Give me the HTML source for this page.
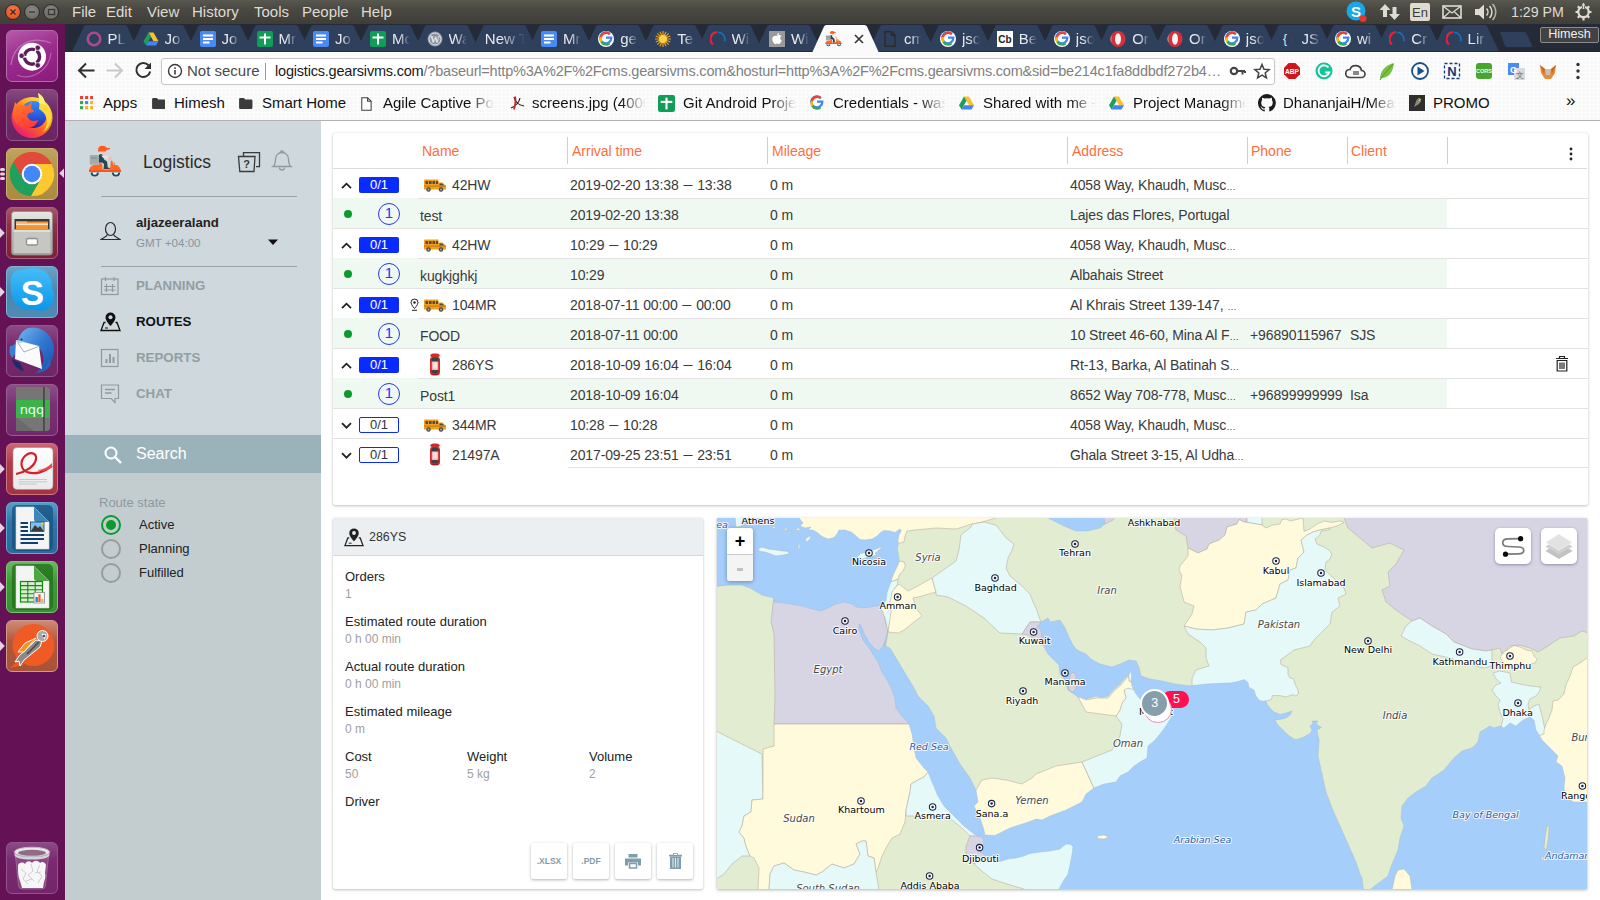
<!DOCTYPE html>
<html lang="en">
<head>
<meta charset="utf-8">
<title>Logistics</title>
<style>
*{box-sizing:border-box;margin:0;padding:0}
html,body{width:1600px;height:900px;overflow:hidden;background:#fff}
body{font-family:"Liberation Sans","DejaVu Sans",sans-serif;position:relative;color:#333}
.abs{position:absolute}
/* ---------- Ubuntu top panel ---------- */
#panel{left:0;top:0;width:1600px;height:24px;background:linear-gradient(#59584f,#4a4943 35%,#3e3d38);color:#dfdbd2;font-size:15px}
#panel .m{position:absolute;top:3px;line-height:18px;white-space:nowrap}
.wb{position:absolute;top:4px;width:16px;height:16px;border-radius:50%;border:1px solid #2b2a27}
/* ---------- launcher ---------- */
#launcher{left:0;top:24px;width:65px;height:876px;background:#641156}
.tile{position:absolute;left:6px;width:52px;height:52px;border-radius:6px;overflow:hidden}
/* ---------- chrome ---------- */
#tabs{left:65px;top:24px;width:1535px;height:28px;background:#242b36}
.tab{position:absolute;top:1px;height:26.500px;width:67px;color:#e8eaf0;font-size:15px}
.tab .sh{position:absolute;left:0;top:0;width:100%;height:100%}
.tab .ic{position:absolute;left:14px;top:6px;width:16px;height:16px}
.tab .tx{position:absolute;left:36px;top:5px;line-height:18px;white-space:nowrap;width:18px;overflow:hidden}
#toolbar{left:65px;top:52px;width:1535px;height:68px;background-color:#f8f8f8;background-image:linear-gradient(#fdfdfd 1px,transparent 1px),linear-gradient(90deg,#fdfdfd 1px,transparent 1px);background-size:4px 4px}
#omni{left:161px;top:58px;width:1114px;height:27px;background:#fff;border:1px solid #c6c6c6;border-radius:3px}
.bm{position:absolute;top:94px;font-size:15px;line-height:18px;color:#111;white-space:nowrap}
.fade{overflow:hidden;-webkit-mask-image:linear-gradient(90deg,#000 78%,transparent 100%);mask-image:linear-gradient(90deg,#000 78%,transparent 100%)}
.tab .tx{-webkit-mask-image:linear-gradient(90deg,#000 40%,transparent 100%);mask-image:linear-gradient(90deg,#000 40%,transparent 100%)}
/* ---------- app sidebar ---------- */
#side{left:65px;top:121px;width:256px;height:779px;background:#cfd8dc}
#side2{left:65px;top:472px;width:256px;height:428px;background:#c3cdd0}
#search{left:65px;top:435px;width:256px;height:38px;background:#9ab3ba}
.mi{position:absolute;left:136px;font-size:13.300px;font-weight:bold;line-height:16px;color:#929ea3;letter-spacing:0}
/* ---------- main ---------- */
.card{background:#fff;box-shadow:0 1px 3px rgba(0,0,0,.24),0 0 1px rgba(0,0,0,.14)}
#tbl{left:333px;top:133px;width:1255px;height:371.500px;border-radius:2px}
.th{position:absolute;top:9px;font-size:14px;line-height:18px;color:#ff6e3a}
.vs{position:absolute;top:4px;width:1px;height:27px;background:#cfcfcf}
.row{position:absolute;left:0;width:1255px;height:30px;border-bottom:1px solid #e3e3e3;font-size:14px;color:#3a3a3a}
.row.g::before{content:"";position:absolute;left:0;top:-1px;width:1114px;height:30px;background:#f0f9f1}
.row span{position:absolute;top:6px;line-height:18px;white-space:nowrap;letter-spacing:-.120px}
.row span.ar{word-spacing:-1.200px}
.row span i{font-style:normal;font-size:9.500px;letter-spacing:0}
.row.x{border-bottom:none}
.row.x::after{content:"";position:absolute;left:85px;bottom:0;width:1170px;height:1px;background:#e3e3e3;z-index:1}
.row span b{font-weight:bold;font-size:9px;margin:0 1px;position:relative;top:-1.700px;letter-spacing:0}
.row.p span,.row.g span{top:7px}
.bdg{position:absolute;left:26px;top:8px;width:40px;height:16px;border-radius:2px;background:#0a2bff;color:#fff;font-size:13px;line-height:16px;text-align:center}
.bdg.o{background:#fff;border:1.5px solid #0a2bff;color:#333;line-height:13px}
.dot{position:absolute;left:11px;top:11px;width:8px;height:8px;border-radius:50%;background:#0b9a2c}
.num{position:absolute;left:45px;top:4px;width:22px;height:22px;border-radius:50%;border:1.800px solid #2236f5;color:#2236f5;font-size:15px;line-height:18.500px;text-align:center}
.chev{position:absolute;left:8px;top:11.500px;width:11px;height:9px}
#info{left:333px;top:518px;width:370px;height:371px;border-radius:2px}
.lb{position:absolute;left:12px;font-size:13px;line-height:15px;color:#222;white-space:nowrap}
.vl{position:absolute;left:12px;font-size:12px;line-height:14px;color:#a0a0a0;white-space:nowrap}
.btn{position:absolute;top:325px;width:36px;height:36px;background:#fff;border-radius:2px;box-shadow:0 1px 3px rgba(0,0,0,.3);color:#7f9dab;font-size:8.5px;font-weight:bold;text-align:center;line-height:36px}
#map{left:717px;top:518px;width:870px;height:371px;overflow:hidden;background:#a5cdfa;box-shadow:0 1px 3px rgba(0,0,0,.3)}
</style>
</head>
<body>
<div id="panel" class="abs">
  <div class="wb" style="left:5px;background:radial-gradient(circle at 50% 35%,#f47b4d,#dd4814)"></div>
  <div class="wb" style="left:24px;background:radial-gradient(circle at 50% 35%,#8a8983,#63625c)"></div>
  <div class="wb" style="left:43px;background:radial-gradient(circle at 50% 35%,#8a8983,#63625c)"></div>
  <svg class="abs" style="left:5px;top:4px" width="56" height="16" viewBox="0 0 56 16" fill="none" stroke="#3a2a22" stroke-width="1.4">
    <path d="M5.5 5.5l5 5M10.5 5.5l-5 5"/><path d="M24 8h6" stroke="#3b3a36"/><rect x="43.5" y="5.5" width="6" height="5" stroke="#3b3a36"/>
  </svg>
  <span class="m" style="left:72px">File</span>
  <span class="m" style="left:106px">Edit</span>
  <span class="m" style="left:147px">View</span>
  <span class="m" style="left:192px">History</span>
  <span class="m" style="left:254px">Tools</span>
  <span class="m" style="left:302px">People</span>
  <span class="m" style="left:361px">Help</span>
  <!-- indicators -->
  <svg class="abs" style="left:1344px;top:0" width="250" height="24" viewBox="0 0 250 24">
    <circle cx="12" cy="11" r="9.5" fill="#1aa7e8"/>
    <text x="12" y="16.5" font-size="15" font-weight="bold" fill="#fff" text-anchor="middle" font-family="Liberation Sans, sans-serif">S</text>
    <circle cx="19" cy="18.5" r="3.6" fill="#e8362b"/>
    <g fill="#dfdbd2"><path d="M41 4l-5.5 6h3.5v7h4v-7h3.500z"/><path d="M49 20l-5.5-6h3.500v-7h4v7h3.500z" transform="translate(1.500,0)"/></g>
    <rect x="66" y="3" width="20" height="18" rx="2" fill="#dfdbd2"/>
    <text x="76" y="17" font-size="13" fill="#3c3b37" text-anchor="middle" font-family="Liberation Sans, sans-serif">En</text>
    <g fill="none" stroke="#dfdbd2" stroke-width="1.6"><rect x="99" y="6" width="18" height="12"/><path d="M99 6l9 7 9-7M99 18l6.500-6M117 18l-6.500-6" stroke-width="1.200"/></g>
    <path d="M131 9h4l5-4.500v15l-5-4.500h-4z" fill="#dfdbd2"/>
    <g fill="none" stroke="#dfdbd2" stroke-width="1.500"><path d="M142.500 8.500a5 5 0 0 1 0 7"/><path d="M145.500 6a8.500 8.500 0 0 1 0 12"/><path d="M148.500 4a11.500 11.500 0 0 1 0 16" opacity=".7"/></g>
    <text x="167" y="17.300" font-size="14.200" fill="#dfdbd2" font-family="Liberation Sans, sans-serif">1:29 PM</text>
    <g fill="none" stroke="#dfdbd2"><circle cx="239.500" cy="12" r="5.200" stroke-width="2.200"/><path d="M239.500 3v5" stroke-width="3" stroke="#3d3c37"/><path d="M239.500 3v6" stroke-width="1.600"/><path d="M239.500 4v2M239.500 18v2.500M231.500 12h2.500M245 12h2.500M233.800 6.300l1.800 1.800M243.400 15.900l1.800 1.800M233.800 17.700l1.800-1.800M243.400 8.100l1.800-1.800" stroke-width="2.200"/></g>
  </svg>
</div>
<!--LAUNCHER-START-->
<div id="launcher" class="abs">
  <!-- 1 ubuntu dash -->
  <div class="tile" style="top:6px;background:linear-gradient(160deg,#b65aa8 0,#9b2d8e 45%,#8a1a7c 100%);border:1px solid #b56aa9">
    <svg width="50" height="50" viewBox="0 0 50 50"><path d="M4 34C6 14 24 4 44 12" fill="none" stroke="#c98cc0" stroke-width="1.200" opacity=".7"/><path d="M10 44c14 6 32-4 34-22" fill="none" stroke="#c98cc0" stroke-width="1.200" opacity=".6"/><circle cx="25" cy="25.700" r="14" fill="#fff"/><circle cx="25" cy="25.700" r="7.600" fill="none" stroke="#5e1d5a" stroke-width="3.400"/><g stroke="#fff" stroke-width="1.500"><path d="M25 25.700h-12M25 25.700l6 10.400M25 25.700l6-10.400"/></g><circle cx="14.600" cy="24.800" r="2.700" fill="#5e1d5a" stroke="#fff" stroke-width=".700"/><circle cx="30.800" cy="34.300" r="2.700" fill="#5e1d5a" stroke="#fff" stroke-width=".700"/><circle cx="30.800" cy="16.800" r="2.700" fill="#5e1d5a" stroke="#fff" stroke-width=".700"/></svg>
  </div>
  <!-- 2 firefox -->
  <div class="tile" style="top:65px;background:linear-gradient(#86487f 0,#6e2a66 40%,#6a2562 100%);border:1px solid #8d5a87">
    <svg width="50" height="50" viewBox="0 0 50 50"><defs><linearGradient id="ffa" x1=".9" y1=".1" x2=".2" y2="1"><stop offset="0" stop-color="#fff060"/><stop offset=".3" stop-color="#ffb01f"/><stop offset=".6" stop-color="#ff5a2a"/><stop offset="1" stop-color="#e3157f"/></linearGradient><linearGradient id="ffb" x1=".5" y1="0" x2=".5" y2="1"><stop offset="0" stop-color="#3a8df5"/><stop offset=".6" stop-color="#2a55d8"/><stop offset="1" stop-color="#3a1f9a"/></linearGradient><linearGradient id="ffc" x1=".2" y1="0" x2=".6" y2="1"><stop offset="0" stop-color="#ff7a2a"/><stop offset="1" stop-color="#ff3a3a"/></linearGradient></defs>
    <circle cx="25" cy="27.500" r="20.500" fill="url(#ffa)"/><circle cx="26.500" cy="24.500" r="13.500" fill="url(#ffb)"/>
    <path d="M8 12l4 5c3-2 6-2 8-1l5-4-1 6c2 1 3 3 3 4l-5 1c-2 1-2 3-1 5 2 3 6 4 10 2-1 5-6 8-11 8-8 0-14-6-14-14 0-4 1-8 2-12z" fill="url(#ffc)"/>
    <path d="M31 3c5 3 7 7 7 12 4 3 6 8 6 13 0 6-3 11-8 14 4-5 5-10 3-15-1-4-4-6-7-8 1-6 0-11-1-16z" fill="#ffd83b"/><path d="M31 3c5 3 7 7 7 12-2-1-4-2-6-2 0-4 0-7-1-10z" fill="#fff27a"/></svg>
  </div>
  <!-- 3 chrome (active) -->
  <div class="tile" style="top:124px;background:linear-gradient(#bfa65c 0,#b0954a 40%,#a88c3f 100%);border:1px solid #c9b373">
    <svg width="50" height="50" viewBox="0 0 50 50"><g transform="translate(25,25)"><path id="chs" d="M0,-10L19.600,-10A22,22 0 0 1 -1.140,21.970L8.660,5A10,10 0 0 0 0,-10Z" fill="#fdc92f"/><circle r="22" fill="#e24a3b"/><path d="M0,-10L19.600,-10A22,22 0 0 1 -1.140,21.970L8.660,5A10,10 0 0 0 0,-10Z" fill="#fdc92f"/><path d="M0,-10L19.600,-10A22,22 0 0 1 -1.140,21.970L8.660,5A10,10 0 0 0 0,-10Z" fill="#1fa15d" transform="rotate(120)"/><path d="M0,-10L19.600,-10A22,22 0 0 1 -1.140,21.970L8.660,5A10,10 0 0 0 0,-10Z" fill="#e24a3b" transform="rotate(240)"/><circle r="10.300" fill="#fff"/><circle r="8.300" fill="#4386f5"/></g></svg>
  </div>
  <svg class="abs" style="left:0;top:139px" width="65" height="24" viewBox="0 0 65 24"><g fill="#e4d3e0"><rect x="0" y="5" width="5" height="3" rx="1.500"/><rect x="0" y="9.500" width="5" height="3" rx="1.500"/><rect x="0" y="14" width="5" height="3" rx="1.500"/><path d="M64 5.500v9.500l-4.800-4.700z"/></g></svg>
  <!-- 4 files -->
  <div class="tile" style="top:183px;background:linear-gradient(#a4596b 0,#8e3046 35%,#7c2038 100%);border:1px solid #a9657a">
    <svg width="50" height="50" viewBox="0 0 50 50"><defs><linearGradient id="fcb" x1="0" y1="0" x2="0" y2="1"><stop offset="0" stop-color="#e6e6e4"/><stop offset="1" stop-color="#a9a9a5"/></linearGradient></defs><rect x="4.500" y="3.500" width="41" height="43.500" rx="3" fill="url(#fcb)" stroke="#8a8a86" stroke-width=".800"/><rect x="7.500" y="11" width="35" height="10.500" fill="#3a3835"/><rect x="9" y="13.500" width="32" height="8" fill="#f0943a"/><rect x="9" y="15.500" width="32" height="1.600" fill="#fde3c4"/><rect x="9" y="13.500" width="11" height="2" fill="#f7b877"/><rect x="6" y="21.500" width="38" height="24" rx="1.500" fill="#c6c6c2" stroke="#9b9b97" stroke-width=".800"/><rect x="6.500" y="22" width="37" height="2" fill="#dededb"/><rect x="19.500" y="30.500" width="11" height="6.500" rx="1.500" fill="#fafafa" stroke="#8f8f8b" stroke-width="1.300"/></svg>
  </div>
  <!-- 5 skype -->
  <div class="tile" style="top:242px;background:linear-gradient(#6aa3c6 0,#4a86ad 50%,#4f8cb3 100%);border:1px solid #7fb1d0">
    <svg width="50" height="50" viewBox="0 0 50 50"><defs><linearGradient id="sk" x1="0" y1="0" x2="0" y2="1"><stop offset="0" stop-color="#46bdf8"/><stop offset="1" stop-color="#0a96ea"/></linearGradient></defs><path d="M4 16C2 8 9 1 17 3c5-3 12-3 18 0 7 3 11 10 10 18 4 7 2 16-4 20-5 4-12 3-15 1-8 2-17-2-20-10-2-5-3-11-2-16z" fill="url(#sk)"/><text x="25.500" y="37.500" font-size="35" font-weight="bold" text-anchor="middle" fill="#fff" font-family="Liberation Sans, sans-serif">S</text></svg>
  </div>
  <!-- 6 thunderbird -->
  <div class="tile" style="top:301px;background:linear-gradient(#8b4a84 0,#762a6c 40%,#6f2566 100%);border:1px solid #91598b">
    <svg width="50" height="50" viewBox="0 0 50 50"><defs><linearGradient id="tb" x1="0" y1="0" x2="1" y2="1"><stop offset="0" stop-color="#7ab4ee"/><stop offset=".5" stop-color="#2f78d0"/><stop offset="1" stop-color="#1a4fa8"/></linearGradient></defs><path d="M21 2c12-3 25 6 26 20 1 12-7 22-18 25 6-5 9-11 7-18-2-8-10-12-18-9l-7-5c1-6 5-11 10-13z" fill="url(#tb)"/><path d="M3 20c2 0 4-1 6-3l3 6-7 9c-3-4-3-8-2-12z" fill="#3a7fd6"/><path d="M5 33c1 6 6 11 12 12l-4-8z" fill="#1a2a6a"/><path d="M9 14l23 6 3 23-27-10z" fill="#fbfbfb"/><path d="M9 14l8 12 16-6" fill="none" stroke="#9a9a9a" stroke-width=".800"/><path d="M9 14l2 4 6-2z" fill="#b9d3ee"/><circle cx="14.500" cy="13.500" r="1" fill="#3a2a10"/><path d="M28 47c8-2 13-8 14-15l2 6c-2 5-8 9-16 9z" fill="#2a62bc"/></svg>
  </div>
  <!-- 7 notes (nqq) -->
  <div class="tile" style="top:360px;background:linear-gradient(#8b4f87 0,#7a3074 40%,#72296b 100%);border:1px solid #936090">
    <svg width="50" height="50" viewBox="0 0 50 50"><path d="M9 2h30q4 0 4 4v36q0 4-4 4H9z" fill="#767676"/><path d="M9 32v14h18z" fill="#6a6a6a"/><rect x="9" y="15" width="34" height="18" fill="#3cb34a"/><rect x="36" y="2" width="1.800" height="44" fill="#4a4a4a"/><text x="25" y="29" font-size="13" text-anchor="middle" fill="#f2fff2" font-family="DejaVu Sans, sans-serif">nqq</text></svg>
  </div>
  <!-- 8 pdf reader -->
  <div class="tile" style="top:419px;background:linear-gradient(#cc6670 0,#b03a48 40%,#a53442 100%);border:1px solid #cf7680">
    <svg width="50" height="50" viewBox="0 0 50 50"><defs><linearGradient id="ev" x1="0" y1="0" x2="0" y2="1"><stop offset="0" stop-color="#fff"/><stop offset="1" stop-color="#e9e9e9"/></linearGradient></defs><rect x="6" y="3.500" width="40" height="42" rx="4" fill="url(#ev)" stroke="#9a9090" stroke-width=".600"/><path d="M9 30c10-2 19-8 20-15 1-6-6-8-11-3-5 5-5 13 2 16 8 3 18 0 25-6" fill="none" stroke="#d8202a" stroke-width="2.200"/><path d="M30 26c6 0 11-3 15-7v4c-5 4-10 5-15 3z" fill="#e04a52"/><g stroke="#bdbdbd" stroke-width=".800"><path d="M12 35.500h28M12 37.800h28M12 40h18"/></g></svg>
  </div>
  <!-- 9 writer -->
  <div class="tile" style="top:478px;background:linear-gradient(#5a9cc8 0,#2f74a8 40%,#2a6a9c 100%);border:1px solid #6aa6cf">
    <svg width="50" height="50" viewBox="0 0 50 50"><rect x="5" y="2" width="41" height="46" rx="5" fill="#14507f" opacity=".75"/><path d="M9 4h18l15 15v27H9z" fill="#f4f4f4" stroke="#d6d6d6" stroke-width=".600"/><path d="M27 4l15 15H30q-3 0-3-3z" fill="#3f86bb"/><g fill="#113f70"><rect x="13.500" y="19" width="7.500" height="2"/><rect x="13.500" y="23" width="7.500" height="2"/><rect x="13.500" y="27" width="7.500" height="2"/><rect x="13.500" y="31" width="23.500" height="2"/><rect x="13.500" y="35" width="23.500" height="2"/><rect x="13.500" y="39" width="17.500" height="2"/></g><rect x="23.500" y="19" width="13.500" height="9.500" fill="#7fc1ee" stroke="#113f70" stroke-width=".800"/><path d="M24 28l4-6 3 3 2-2 3.500 5z" fill="#3a3a3a"/><rect x="34" y="19.500" width="2.500" height="2.500" fill="#f2c52e"/></svg>
  </div>
  <!-- 10 calc -->
  <div class="tile" style="top:537px;background:linear-gradient(#6ab860 0,#3f9a36 40%,#3a9030 100%);border:1px solid #7cc472">
    <svg width="50" height="50" viewBox="0 0 50 50"><rect x="5" y="2" width="41" height="46" rx="5" fill="#1d6f17" opacity=".75"/><path d="M9 4h18l15 15v27H9z" fill="#f4f4f4" stroke="#d6d6d6" stroke-width=".600"/><path d="M27 4l15 15H30q-3 0-3-3z" fill="#4aa83e"/><rect x="13.500" y="19.500" width="22" height="20.500" fill="#d5f0cf" stroke="#168a0e" stroke-width="1.200"/><g stroke="#168a0e" stroke-width="1.100"><path d="M13.500 23.600h22M13.500 27.700h22M13.500 31.800h22M13.500 35.900h22M20.800 19.500v20.500M28.200 19.500v20.500"/></g><rect x="27" y="30.500" width="10.500" height="10.500" fill="#f2f2f2" stroke="#8a8a8a" stroke-width=".800"/><rect x="28.500" y="35" width="2.300" height="5" fill="#2a7fd6"/><rect x="31.300" y="32.300" width="2.300" height="7.700" fill="#e8652a"/><rect x="34.100" y="37" width="2.300" height="3" fill="#f2b82e"/></svg>
  </div>
  <!-- 11 postman -->
  <div class="tile" style="top:596px;background:linear-gradient(#cf8a74 0,#b05a3c 40%,#a85236 100%);border:1px solid #d09a88">
    <svg width="50" height="50" viewBox="0 0 50 50"><circle cx="26.500" cy="24" r="21" fill="#f05a24"/><path d="M3 47l8-7 6 4z" fill="#f05a24"/><path d="M8 41l4-6 17-16 6 1-2 6-16 13-4 6-1-5z" fill="#8a8a8a" stroke="#fff" stroke-width="1"/><path d="M11 31l7-9 11-5-12 14z" fill="#f7941e" stroke="#fff" stroke-width=".900"/><path d="M20 33l12-12" stroke="#4a4a4a" stroke-width="1.600"/><circle cx="35.500" cy="15" r="5.500" fill="#a9a9a9" stroke="#fff" stroke-width="1"/><path d="M34.500 12.500l5 1-2 5z" fill="#fff"/><circle cx="37" cy="15" r="1.300" fill="#555"/></svg>
  </div>
  <!-- trash -->
  <div class="tile" style="top:818px;background:linear-gradient(#8a4a84 0,#7a2a70 35%,#74266b 100%);border:1px solid #90558a">
    <svg width="50" height="50" viewBox="0 0 50 50"><path d="M8 9l3.500 34q.300 3 4 3h19q3.700 0 4-3L42 9z" fill="#fff" fill-opacity=".14" stroke="#d9c6d6" stroke-opacity=".5" stroke-width=".600"/><path d="M11 22c2-3 5-3 7-1 1-3 5-4 7-1 2-3 6-3 8 0 2-2 5-1 6 2l-1 8c1 3 0 6-1 9l-1 6H15l-2-7c-2-4-2-9-2-16z" fill="#f6f6f6"/><g fill="none" stroke="#c9c9c9" stroke-width=".900"><path d="M14 26l5 4-3 6 5 5M24 21l2 7-5 4 6 6M33 22l-3 6 5 5-4 7M19 38l6-2M28 30l6-1"/></g><ellipse cx="25" cy="9" rx="17.500" ry="4.800" fill="#e9e9ea" stroke="#bdbdc0" stroke-width="1"/><ellipse cx="25" cy="9.800" rx="14" ry="3" fill="#8e6c8a"/><path d="M7.500 9q0 5 17.500 5t17.500-5v2.500q0 5-17.500 5T7.500 11.500z" fill="#d4d4d6"/></svg>
  </div>
  <svg class="abs" style="left:0;top:0" width="8" height="660" viewBox="0 0 8 660" fill="#e4d3e0"><path d="M0 204v10l4.800-5zM0 263v10l4.800-5zM0 440v10l4.800-5zM0 499v10l4.800-5zM0 558v10l4.800-5zM0 617v10l4.800-5z"/></svg>
</div>

<!--LAUNCHER-END-->
<!--TABS-START-->
<div id="tabs" class="abs">
<div style="position:absolute;left:0;top:27.300px;width:1535px;height:1.200px;background:#1a2840;z-index:2"></div>
<div class="tab" style="left:6.5px"><svg class="sh" viewBox="0 0 67 27" preserveAspectRatio="none"><path d="M0 27L12 1.500Q12.700 0 14.500 0h38q1.800 0 2.500 1.500L67 27z" fill="#2f405c"/></svg><svg class="ic" viewBox="0 0 16 16"><circle cx="8" cy="8" r="6.200" fill="none" stroke="#b0488f" stroke-width="2.600"/></svg><span class="tx">PL</span></div>
<div class="tab" style="left:63.5px"><svg class="sh" viewBox="0 0 67 27" preserveAspectRatio="none"><path d="M0 27L12 1.500Q12.700 0 14.500 0h38q1.800 0 2.500 1.500L67 27z" fill="#2f405c"/></svg><svg class="ic" viewBox="0 0 16 16"><path d="M5.500 1.500h5l5 8.700h-5z" fill="#fbc02d"/><path d="M5.500 1.500L.500 10.200l2.500 4.300 5-8.700z" fill="#1e9e5a"/><path d="M5.500 10.200h10L13 14.500H3z" fill="#4285f4"/></svg><span class="tx">Jo</span></div>
<div class="tab" style="left:120.5px"><svg class="sh" viewBox="0 0 67 27" preserveAspectRatio="none"><path d="M0 27L12 1.500Q12.700 0 14.500 0h38q1.800 0 2.500 1.500L67 27z" fill="#2f405c"/></svg><svg class="ic" viewBox="0 0 16 16"><rect width="16" height="16" rx="2" fill="#4a8af4"/><g fill="#fff"><rect x="3" y="3.500" width="10" height="2"/><rect x="3" y="7" width="10" height="2"/><rect x="3" y="10.500" width="6.500" height="2"/></g></svg><span class="tx">Jo</span></div>
<div class="tab" style="left:177.5px"><svg class="sh" viewBox="0 0 67 27" preserveAspectRatio="none"><path d="M0 27L12 1.500Q12.700 0 14.500 0h38q1.800 0 2.500 1.500L67 27z" fill="#2f405c"/></svg><svg class="ic" viewBox="0 0 16 16"><rect width="16" height="16" rx="2" fill="#0f9d58"/><g fill="#fff"><rect x="7" y="2.500" width="2" height="11"/><rect x="2.500" y="5.500" width="11" height="2"/></g></svg><span class="tx">Mr</span></div>
<div class="tab" style="left:234.0px"><svg class="sh" viewBox="0 0 67 27" preserveAspectRatio="none"><path d="M0 27L12 1.500Q12.700 0 14.500 0h38q1.800 0 2.500 1.500L67 27z" fill="#2f405c"/></svg><svg class="ic" viewBox="0 0 16 16"><rect width="16" height="16" rx="2" fill="#4a8af4"/><g fill="#fff"><rect x="3" y="3.500" width="10" height="2"/><rect x="3" y="7" width="10" height="2"/><rect x="3" y="10.500" width="6.500" height="2"/></g></svg><span class="tx">Jo</span></div>
<div class="tab" style="left:291.0px"><svg class="sh" viewBox="0 0 67 27" preserveAspectRatio="none"><path d="M0 27L12 1.500Q12.700 0 14.500 0h38q1.800 0 2.500 1.500L67 27z" fill="#2f405c"/></svg><svg class="ic" viewBox="0 0 16 16"><rect width="16" height="16" rx="2" fill="#0f9d58"/><g fill="#fff"><rect x="7" y="2.500" width="2" height="11"/><rect x="2.500" y="5.500" width="11" height="2"/></g></svg><span class="tx">Mc</span></div>
<div class="tab" style="left:347.5px"><svg class="sh" viewBox="0 0 67 27" preserveAspectRatio="none"><path d="M0 27L12 1.500Q12.700 0 14.500 0h38q1.800 0 2.500 1.500L67 27z" fill="#2f405c"/></svg><svg class="ic" viewBox="0 0 16 16"><circle cx="8" cy="8" r="7.500" fill="#8a929e"/><circle cx="8" cy="8" r="6" fill="none" stroke="#e3e6ea" stroke-width="1"/><text x="8" y="12" font-size="10" font-weight="bold" fill="#e3e6ea" text-anchor="middle" font-family="Liberation Serif, serif">W</text></svg><span class="tx">Wa</span></div>
<div class="tab" style="left:405.8px"><svg class="sh" viewBox="0 0 67 27" preserveAspectRatio="none"><path d="M0 27L12 1.500Q12.700 0 14.500 0h38q1.800 0 2.500 1.500L67 27z" fill="#2f405c"/></svg><span class="tx" style="left:14px;width:40px">New T</span></div>
<div class="tab" style="left:462.0px"><svg class="sh" viewBox="0 0 67 27" preserveAspectRatio="none"><path d="M0 27L12 1.500Q12.700 0 14.500 0h38q1.800 0 2.500 1.500L67 27z" fill="#2f405c"/></svg><svg class="ic" viewBox="0 0 16 16"><rect width="16" height="16" rx="2" fill="#4a8af4"/><g fill="#fff"><rect x="3" y="3.500" width="10" height="2"/><rect x="3" y="7" width="10" height="2"/><rect x="3" y="10.500" width="6.500" height="2"/></g></svg><span class="tx">Mr</span></div>
<div class="tab" style="left:519.2px"><svg class="sh" viewBox="0 0 67 27" preserveAspectRatio="none"><path d="M0 27L12 1.500Q12.700 0 14.500 0h38q1.800 0 2.500 1.500L67 27z" fill="#2f405c"/></svg><svg class="ic" viewBox="0 0 16 16"><circle cx="8" cy="8" r="8" fill="#fff"/><path d="M8 6.700h5.300a5.500 5.500 0 1 1-1.500-3.600" fill="none" stroke="#4285f4" stroke-width="2.300"/><path d="M2.800 6.300A5.500 5.500 0 0 1 11.800 3.100" fill="none" stroke="#ea4335" stroke-width="2.300"/><path d="M2.800 6.300A5.500 5.500 0 0 0 3.300 10.900" fill="none" stroke="#fbbc05" stroke-width="2.300"/><path d="M3.300 10.900A5.500 5.500 0 0 0 11.500 12.300" fill="none" stroke="#34a853" stroke-width="2.300"/></svg><span class="tx">ge</span></div>
<div class="tab" style="left:576.2px"><svg class="sh" viewBox="0 0 67 27" preserveAspectRatio="none"><path d="M0 27L12 1.500Q12.700 0 14.500 0h38q1.800 0 2.500 1.500L67 27z" fill="#2f405c"/></svg><svg class="ic" viewBox="0 0 16 16"><g stroke="#f0a020" stroke-width="1.200"><path d="M8 0v16M0 8h16M2.300 2.300l11.400 11.400M13.700 2.300L2.300 13.700M5 .700l6 14.600M11 .700L5 15.300M.700 5l14.600 6M.700 11l14.600-6"/></g><circle cx="8" cy="8" r="4" fill="#ffd23a"/></svg><span class="tx">Te</span></div>
<div class="tab" style="left:630.6px"><svg class="sh" viewBox="0 0 67 27" preserveAspectRatio="none"><path d="M0 27L12 1.500Q12.700 0 14.500 0h38q1.800 0 2.500 1.500L67 27z" fill="#2f405c"/></svg><svg class="ic" viewBox="0 0 16 16"><path d="M3 13.500A7 7 0 0 1 7 1.200" fill="none" stroke="#e8203a" stroke-width="2.200"/><path d="M8 1.200a7 7 0 0 1 6.500 9" fill="none" stroke="#1a6fb8" stroke-width="1.600"/></svg><span class="tx">Wi</span></div>
<div class="tab" style="left:690.0px"><svg class="sh" viewBox="0 0 67 27" preserveAspectRatio="none"><path d="M0 27L12 1.500Q12.700 0 14.500 0h38q1.800 0 2.500 1.500L67 27z" fill="#2f405c"/></svg><svg class="ic" viewBox="0 0 16 16"><rect width="16" height="16" fill="#9a9a9a"/><path d="M8 5c1-1.500 3.500-1.300 4.300.300-1.600 1-1.400 3.400.400 4.100-.600 1.800-1.800 3.600-3 3.600-.700 0-1-.400-1.700-.400s-1.100.400-1.700.400c-1.300 0-3-2.800-3-5 0-2.600 2.400-3.800 4.700-3z" fill="#fff"/><path d="M8 4.500c0-1.300 1-2.400 2.200-2.500 0 1.400-1 2.500-2.200 2.500z" fill="#fff"/></svg><span class="tx">Wi</span></div>
<div class="tab" style="left:747.2px;z-index:3;height:28px"><svg class="sh" viewBox="0 0 67 27" preserveAspectRatio="none"><path d="M0 27L12 1.500Q12.700 0 14.500 0h38q1.800 0 2.500 1.500L67 27z" fill="#fafafa"/></svg><svg class="ic" style="left:8.500px;top:2.100px;width:25px;height:22.500px" viewBox="0 0 1000 900"><rect x="195" y="340" width="172" height="192" fill="#a5abab"/><rect x="225" y="385" width="110" height="30" fill="#8b9393"/><path d="M180,682Q172,612 230,562Q262,535 330,535L372,535L380,503L432,503Q447,510 447,540L447,608Q452,630 482,630L578,630Q604,620 609,560L614,470Q619,443 640,449Q656,460 657,500L661,535L742,541Q802,572 822,652L822,682Z" fill="#ff6a22"/><path d="M180,682Q178,655 186,640L815,640Q822,660 822,682Z" fill="#ff5216"/><rect x="664" y="488" width="36" height="48" rx="6" fill="#a5abab"/><path d="M375,497L375,352L400,320L445,330L482,430L540,470L556,590L592,600L592,622L470,622L482,520L440,492Z" fill="#2b4450"/><path d="M428,348L562,374L556,410L448,386Z" fill="#e9e9e9"/><circle cx="600" cy="410" r="38" fill="#ffb4b6"/><ellipse cx="472" cy="285" rx="52" ry="42" fill="#ffc6c2"/><path d="M360,272Q352,160 440,155Q520,158 542,205L600,194Q608,214 590,226L520,252L520,272Z" fill="#ff5a1f"/><path d="M213,690A82,82 0 0 0 377,690Z" fill="#1f4a57"/><path d="M250,690A45,45 0 0 0 340,690Z" fill="#fff"/><path d="M638,690A82,82 0 0 0 802,690Z" fill="#1f4a57"/><path d="M675,690A45,45 0 0 0 765,690Z" fill="#fff"/></svg><svg class="ic" style="left:41.750px;top:9px;width:10px;height:10px" viewBox="0 0 10 10"><path d="M1 1l8 8M9 1l-8 8" stroke="#333" stroke-width="1.600"/></svg></div>
<div class="tab" style="left:803.0px"><svg class="sh" viewBox="0 0 67 27" preserveAspectRatio="none"><path d="M0 27L12 1.500Q12.700 0 14.500 0h38q1.800 0 2.500 1.500L67 27z" fill="#2f405c"/></svg><svg class="ic" viewBox="0 0 16 16"><path d="M3 .800h6.500L13 4.300v10.900H3z" fill="none" stroke="#2b2b2b" stroke-width="1.400"/><path d="M9.500.800v3.500H13" fill="none" stroke="#2b2b2b" stroke-width="1.400"/></svg><span class="tx">cm</span></div>
<div class="tab" style="left:861.0px"><svg class="sh" viewBox="0 0 67 27" preserveAspectRatio="none"><path d="M0 27L12 1.500Q12.700 0 14.500 0h38q1.800 0 2.500 1.500L67 27z" fill="#2f405c"/></svg><svg class="ic" viewBox="0 0 16 16"><circle cx="8" cy="8" r="8" fill="#fff"/><path d="M8 6.700h5.300a5.500 5.500 0 1 1-1.500-3.600" fill="none" stroke="#4285f4" stroke-width="2.300"/><path d="M2.800 6.300A5.500 5.500 0 0 1 11.800 3.100" fill="none" stroke="#ea4335" stroke-width="2.300"/><path d="M2.800 6.300A5.500 5.500 0 0 0 3.300 10.900" fill="none" stroke="#fbbc05" stroke-width="2.300"/><path d="M3.300 10.900A5.500 5.500 0 0 0 11.500 12.300" fill="none" stroke="#34a853" stroke-width="2.300"/></svg><span class="tx">jso</span></div>
<div class="tab" style="left:917.8px"><svg class="sh" viewBox="0 0 67 27" preserveAspectRatio="none"><path d="M0 27L12 1.500Q12.700 0 14.500 0h38q1.800 0 2.500 1.500L67 27z" fill="#2f405c"/></svg><svg class="ic" viewBox="0 0 16 16"><rect width="16" height="16" fill="#fff"/><text x="8" y="12" font-size="10" font-weight="bold" fill="#222" text-anchor="middle" font-family="Liberation Sans, sans-serif">Cb</text></svg><span class="tx">Be</span></div>
<div class="tab" style="left:974.8px"><svg class="sh" viewBox="0 0 67 27" preserveAspectRatio="none"><path d="M0 27L12 1.500Q12.700 0 14.500 0h38q1.800 0 2.500 1.500L67 27z" fill="#2f405c"/></svg><svg class="ic" viewBox="0 0 16 16"><circle cx="8" cy="8" r="8" fill="#fff"/><path d="M8 6.700h5.300a5.500 5.500 0 1 1-1.500-3.600" fill="none" stroke="#4285f4" stroke-width="2.300"/><path d="M2.800 6.300A5.500 5.500 0 0 1 11.800 3.100" fill="none" stroke="#ea4335" stroke-width="2.300"/><path d="M2.800 6.300A5.500 5.500 0 0 0 3.300 10.900" fill="none" stroke="#fbbc05" stroke-width="2.300"/><path d="M3.300 10.900A5.500 5.500 0 0 0 11.500 12.300" fill="none" stroke="#34a853" stroke-width="2.300"/></svg><span class="tx">jso</span></div>
<div class="tab" style="left:1031.2px"><svg class="sh" viewBox="0 0 67 27" preserveAspectRatio="none"><path d="M0 27L12 1.500Q12.700 0 14.500 0h38q1.800 0 2.500 1.500L67 27z" fill="#2f405c"/></svg><svg class="ic" viewBox="0 0 16 16"><ellipse cx="8" cy="8" rx="7.500" ry="8" fill="#d8303a"/><ellipse cx="8" cy="8" rx="3" ry="5.800" fill="#f4f4f4"/><path d="M1.500 4a7.500 8 0 0 0 0 8z" fill="#a8a8ae"/></svg><span class="tx">Or</span></div>
<div class="tab" style="left:1088.0px"><svg class="sh" viewBox="0 0 67 27" preserveAspectRatio="none"><path d="M0 27L12 1.500Q12.700 0 14.500 0h38q1.800 0 2.500 1.500L67 27z" fill="#2f405c"/></svg><svg class="ic" viewBox="0 0 16 16"><ellipse cx="8" cy="8" rx="7.500" ry="8" fill="#d8303a"/><ellipse cx="8" cy="8" rx="3" ry="5.800" fill="#f4f4f4"/><path d="M1.500 4a7.500 8 0 0 0 0 8z" fill="#a8a8ae"/></svg><span class="tx">Or</span></div>
<div class="tab" style="left:1144.8px"><svg class="sh" viewBox="0 0 67 27" preserveAspectRatio="none"><path d="M0 27L12 1.500Q12.700 0 14.500 0h38q1.800 0 2.500 1.500L67 27z" fill="#2f405c"/></svg><svg class="ic" viewBox="0 0 16 16"><circle cx="8" cy="8" r="8" fill="#fff"/><path d="M8 6.700h5.300a5.500 5.500 0 1 1-1.500-3.600" fill="none" stroke="#4285f4" stroke-width="2.300"/><path d="M2.800 6.300A5.500 5.500 0 0 1 11.800 3.100" fill="none" stroke="#ea4335" stroke-width="2.300"/><path d="M2.800 6.300A5.500 5.500 0 0 0 3.300 10.900" fill="none" stroke="#fbbc05" stroke-width="2.300"/><path d="M3.300 10.900A5.500 5.500 0 0 0 11.500 12.300" fill="none" stroke="#34a853" stroke-width="2.300"/></svg><span class="tx">jso</span></div>
<div class="tab" style="left:1200.5px"><svg class="sh" viewBox="0 0 67 27" preserveAspectRatio="none"><path d="M0 27L12 1.500Q12.700 0 14.500 0h38q1.800 0 2.500 1.500L67 27z" fill="#2f405c"/></svg><svg class="ic" viewBox="0 0 16 16"><text x="5" y="12" font-size="12" fill="#e8eaf0" text-anchor="middle" font-family="Liberation Sans, sans-serif">{</text><text x="11.500" y="12" font-size="12" fill="#3d4658" text-anchor="middle" font-family="Liberation Sans, sans-serif">}</text></svg><span class="tx">JS</span></div>
<div class="tab" style="left:1256.0px"><svg class="sh" viewBox="0 0 67 27" preserveAspectRatio="none"><path d="M0 27L12 1.500Q12.700 0 14.500 0h38q1.800 0 2.500 1.500L67 27z" fill="#2f405c"/></svg><svg class="ic" viewBox="0 0 16 16"><circle cx="8" cy="8" r="8" fill="#fff"/><path d="M8 6.700h5.300a5.500 5.500 0 1 1-1.500-3.600" fill="none" stroke="#4285f4" stroke-width="2.300"/><path d="M2.800 6.300A5.500 5.500 0 0 1 11.800 3.100" fill="none" stroke="#ea4335" stroke-width="2.300"/><path d="M2.800 6.300A5.500 5.500 0 0 0 3.300 10.900" fill="none" stroke="#fbbc05" stroke-width="2.300"/><path d="M3.300 10.900A5.500 5.500 0 0 0 11.500 12.300" fill="none" stroke="#34a853" stroke-width="2.300"/></svg><span class="tx">wi</span></div>
<div class="tab" style="left:1310.3px"><svg class="sh" viewBox="0 0 67 27" preserveAspectRatio="none"><path d="M0 27L12 1.500Q12.700 0 14.500 0h38q1.800 0 2.500 1.500L67 27z" fill="#2f405c"/></svg><svg class="ic" viewBox="0 0 16 16"><path d="M3 13.500A7 7 0 0 1 7 1.200" fill="none" stroke="#e8203a" stroke-width="2.200"/><path d="M8 1.200a7 7 0 0 1 6.500 9" fill="none" stroke="#1a6fb8" stroke-width="1.600"/></svg><span class="tx">Cr</span></div>
<div class="tab" style="left:1366.6px"><svg class="sh" viewBox="0 0 67 27" preserveAspectRatio="none"><path d="M0 27L12 1.500Q12.700 0 14.500 0h38q1.800 0 2.500 1.500L67 27z" fill="#2f405c"/></svg><svg class="ic" viewBox="0 0 16 16"><path d="M3 13.500A7 7 0 0 1 7 1.200" fill="none" stroke="#e8203a" stroke-width="2.200"/><path d="M8 1.200a7 7 0 0 1 6.500 9" fill="none" stroke="#1a6fb8" stroke-width="1.600"/></svg><span class="tx">Lir</span></div>
<svg class="abs" style="left:1433px;top:7.500px" width="36" height="15" viewBox="0 0 36 15"><path d="M2 0h24q2 0 2.800 1.800L34.500 15H9.500q-2 0-2.800-1.800z" fill="#2f405c"/></svg>
<div class="abs" style="left:1475.300px;top:3.100px;width:58.500px;height:15.800px;border:1px solid #8c8c8c;border-radius:2px;background:#424242;color:#f0f0f0;font-size:12.600px;line-height:13.500px;text-align:center">Himesh</div>
</div>
<!--TABS-END-->
<!--TOOLBAR-START-->
<div id="toolbar" class="abs"></div>
<div class="abs" style="left:65px;top:120px;width:1535px;height:1px;background:#b0b0b0;z-index:2"></div>
<svg class="abs" style="left:65px;top:52px" width="100" height="36" viewBox="0 0 100 36" fill="none">
  <path d="M29.500 18.500h-15M21 11.500l-7 7 7 7" stroke="#2f2f2f" stroke-width="2"/>
  <path d="M41.500 18.500h15M50 11.500l7 7-7 7" stroke="#c9c9c9" stroke-width="2"/>
  <path d="M83.500 13.200A7 7 0 1 0 85.200 19.500" stroke="#2f2f2f" stroke-width="2"/><path d="M86 10.500v6.500h-6.500z" fill="#2f2f2f"/>
</svg>
<div id="omni" class="abs"></div>
<svg class="abs" style="left:167px;top:63px" width="16" height="16" viewBox="0 0 16 16"><circle cx="8" cy="8" r="6.500" fill="none" stroke="#3c3c3c" stroke-width="1.400"/><rect x="7.200" y="7" width="1.600" height="4.500" fill="#3c3c3c"/><rect x="7.200" y="4.300" width="1.600" height="1.600" fill="#3c3c3c"/></svg>
<div class="abs" style="left:187px;top:61px;font-size:15px;line-height:20px;color:#4a4a4a;white-space:nowrap">Not secure</div>
<div class="abs" style="left:265px;top:63px;width:1px;height:17px;background:#9a9a9a"></div>
<div class="abs" style="left:275px;top:61px;width:950px;overflow:hidden;font-size:14.500px;letter-spacing:-.200px;line-height:20px;color:#1a1a1a;white-space:nowrap">logistics.gearsivms.com<span style="color:#808080">/?baseurl=http%3A%2F%2Fcms.gearsivms.com&amp;hosturl=http%3A%2F%2Fcms.gearsivms.com&amp;sid=be214c1fa8ddbdf272b4…</span></div>
<svg class="abs" style="left:1228px;top:62px" width="46" height="18" viewBox="0 0 46 18"><circle cx="6" cy="9" r="3.200" fill="none" stroke="#444" stroke-width="2.200"/><path d="M9 9h8M14.500 9v3.500M17 9v2" stroke="#444" stroke-width="2"/><path d="M34 2.500l2 4.700 5.100.400-3.900 3.300 1.200 5-4.400-2.700-4.400 2.700 1.200-5-3.900-3.300 5.100-.400z" fill="none" stroke="#444" stroke-width="1.500"/></svg>
<!-- extensions -->
<svg class="abs" style="left:1280px;top:58px" width="312" height="26" viewBox="0 0 312 26">
  <path d="M8.700 5h6.600l4.700 4.700v6.600L15.300 21H8.700L4 16.300V9.700z" fill="#d0161b"/><text x="12" y="15.500" font-size="6.600" font-weight="bold" fill="#fff" text-anchor="middle" font-family="Liberation Sans, sans-serif">ABP</text>
  <circle cx="44" cy="13" r="8.500" fill="#15c39a"/><path d="M48.500 9.500a5.500 5.500 0 1 0 .800 5h-4" fill="none" stroke="#fff" stroke-width="1.800"/>
  <path d="M69.500 19.500a4 4 0 0 1 .500-8 6 6 0 0 1 11.500 1 3.500 3.500 0 0 1 0 7z" fill="none" stroke="#444" stroke-width="1.700"/><rect x="73" y="13" width="6" height="4" fill="#888"/>
  <path d="M100 22c0-9 5-15 14-17-1 9-5 15-13 15z" fill="#7ac143"/><path d="M100 22c4-6 8-10 13-16" stroke="#4e9a22" stroke-width="1" fill="none"/>
  <circle cx="140" cy="13" r="8" fill="none" stroke="#1a4f8a" stroke-width="1.800"/><path d="M137.500 8.500l7 4.500-7 4.500z" fill="#1a4f8a"/>
  <rect x="164.500" y="5.500" width="15" height="15" fill="none" stroke="#123a7a" stroke-width="1.300" stroke-dasharray="3 2"/><text x="172" y="18" font-size="13" font-weight="bold" fill="#123a7a" text-anchor="middle" font-family="Liberation Sans, sans-serif">N</text>
  <rect x="196" y="5" width="16" height="16" rx="3" fill="#4aa52e"/><text x="204" y="15.300" font-size="5.600" font-weight="bold" fill="#eaffd8" text-anchor="middle" font-family="Liberation Sans, sans-serif">CORS</text>
  <rect x="228" y="5" width="11" height="12" fill="#4a8af4"/><rect x="234" y="10" width="11" height="12" fill="#d5d9e0"/><text x="233.500" y="14.500" font-size="9" font-weight="bold" fill="#fff" text-anchor="middle" font-family="Liberation Sans, sans-serif">G</text><text x="240" y="20" font-size="8" fill="#666" text-anchor="middle" font-family="Liberation Sans, sans-serif">文</text>
  <path d="M260 7l5 4h6l5-4-1 8-4 6h-6l-4-6z" fill="#e88a3a"/><path d="M265 11h6l-1 6h-4z" fill="#c8bfb5"/><path d="M260 7l5 4-1 5zM276 7l-5 4 1 5z" fill="#c96a1e"/>
  <circle cx="298" cy="6.500" r="1.700" fill="#333"/><circle cx="298" cy="13" r="1.700" fill="#333"/><circle cx="298" cy="19.500" r="1.700" fill="#333"/>
</svg>
<!-- bookmarks -->
<svg class="abs" style="left:79.500px;top:96.200px" width="13.800" height="13.800" viewBox="0 0 15 15"><rect x="0" y="0" width="3.400" height="3.400" fill="#e94335"/><rect x="5.500" y="0" width="3.400" height="3.400" fill="#e94335"/><rect x="11" y="0" width="3.400" height="3.400" fill="#e94335"/><rect x="0" y="5.500" width="3.400" height="3.400" fill="#34a853"/><rect x="5.500" y="5.500" width="3.400" height="3.400" fill="#4285f4"/><rect x="11" y="5.500" width="3.400" height="3.400" fill="#fbad1c"/><rect x="0" y="11" width="3.400" height="3.400" fill="#34a853"/><rect x="5.500" y="11" width="3.400" height="3.400" fill="#fbad1c"/><rect x="11" y="11" width="3.400" height="3.400" fill="#fbad1c"/></svg>
<span class="bm" style="left:103px">Apps</span>
<svg class="abs" style="left:151.500px;top:97.800px" width="13.500" height="11" viewBox="0 0 17 14"><path d="M0 1.500Q0 0 1.500 0h4.500l2 2h7.500Q17 2 17 3.500v9Q17 14 15.500 14h-14Q0 14 0 12.500z" fill="#3c3c3c"/></svg>
<span class="bm" style="left:174px">Himesh</span>
<svg class="abs" style="left:239px;top:97.800px" width="13.500" height="11" viewBox="0 0 17 14"><path d="M0 1.500Q0 0 1.500 0h4.500l2 2h7.500Q17 2 17 3.500v9Q17 14 15.500 14h-14Q0 14 0 12.500z" fill="#3c3c3c"/></svg>
<span class="bm" style="left:262px">Smart Home</span>
<svg class="abs" style="left:361.300px;top:96.500px" width="10.900" height="14" viewBox="0 0 14 18"><path d="M1 1h7.500L13 5.500V17H1z" fill="#fff" stroke="#3c3c3c" stroke-width="1.300"/><path d="M8.500 1v4.500H13" fill="none" stroke="#3c3c3c" stroke-width="1.300"/></svg>
<span class="bm fade" style="left:383px;width:111px">Agile Captive Po</span>
<svg class="abs" style="left:509px;top:95px" width="16" height="16" viewBox="0 0 16 16"><path d="M2 13c5-2 8-5 9-10M5 2c1 5 4 8 10 9" fill="none" stroke="#222" stroke-width="1.200"/><path d="M6 1.500c1 3 1 6-1 13" fill="none" stroke="#e02020" stroke-width="1.800"/></svg>
<span class="bm fade" style="left:532px;width:114px">screens.jpg (4000</span>
<svg class="abs" style="left:658px;top:95px" width="17" height="17" viewBox="0 0 16 16"><rect width="16" height="16" rx="2" fill="#0f9d58"/><g fill="#fff"><rect x="7" y="2.500" width="2" height="11"/><rect x="2.500" y="5.500" width="11" height="2"/></g></svg>
<span class="bm fade" style="left:683px;width:113px">Git Android Proje</span>
<svg class="abs" style="left:809px;top:95px" width="16" height="16" viewBox="0 0 16 16"><path d="M8 6.700h5.300a5.500 5.500 0 1 1-1.500-3.600" fill="none" stroke="#4285f4" stroke-width="2.300"/><path d="M2.800 6.300A5.500 5.500 0 0 1 11.800 3.100" fill="none" stroke="#ea4335" stroke-width="2.300"/><path d="M2.800 6.300A5.500 5.500 0 0 0 3.300 10.900" fill="none" stroke="#fbbc05" stroke-width="2.300"/><path d="M3.300 10.900A5.500 5.500 0 0 0 11.500 12.300" fill="none" stroke="#34a853" stroke-width="2.300"/></svg>
<span class="bm fade" style="left:833px;width:113px">Credentials - was</span>
<svg class="abs" style="left:958px;top:95px" width="17" height="16" viewBox="0 0 16 16"><path d="M5.500 1.500h5l5 8.700h-5z" fill="#fbc02d"/><path d="M5.500 1.500L.500 10.200l2.500 4.300 5-8.700z" fill="#1e9e5a"/><path d="M5.500 10.200h10L13 14.500H3z" fill="#4285f4"/></svg>
<span class="bm fade" style="left:983px;width:113px">Shared with me - </span>
<svg class="abs" style="left:1108px;top:95px" width="17" height="16" viewBox="0 0 16 16"><path d="M5.500 1.500h5l5 8.700h-5z" fill="#fbc02d"/><path d="M5.500 1.500L.500 10.200l2.500 4.300 5-8.700z" fill="#1e9e5a"/><path d="M5.500 10.200h10L13 14.500H3z" fill="#4285f4"/></svg>
<span class="bm fade" style="left:1133px;width:113px">Project Managme</span>
<svg class="abs" style="left:1258px;top:94px" width="18" height="18" viewBox="0 0 16 16"><path d="M8 0a8 8 0 0 0-2.500 15.600c.400.100.500-.200.500-.400v-1.400c-2.200.500-2.700-1-2.700-1-.400-.900-.900-1.200-.900-1.200-.700-.500.100-.500.100-.500.800.100 1.200.800 1.200.800.700 1.200 1.900.900 2.300.700.100-.500.300-.900.500-1.100-1.800-.200-3.600-.900-3.600-4 0-.900.300-1.600.800-2.100-.100-.200-.400-1 .100-2.100 0 0 .700-.200 2.200.800a7.500 7.500 0 0 1 4 0c1.500-1 2.200-.800 2.200-.800.400 1.100.200 1.900.100 2.100.500.600.800 1.300.800 2.100 0 3.100-1.900 3.700-3.700 3.900.300.300.600.800.600 1.500v2.200c0 .200.100.500.600.400A8 8 0 0 0 8 0z" fill="#1b1b1b"/></svg>
<span class="bm fade" style="left:1283px;width:113px">DhananjaiH/Mea</span>
<svg class="abs" style="left:1409px;top:95px" width="16" height="16" viewBox="0 0 16 16"><rect width="16" height="16" fill="#2e2e2e"/><path d="M5 12l3-8 4 2-2 3z" fill="#8a8a80"/><path d="M9 3l3 1-1 3z" fill="#e8d24a"/></svg>
<span class="bm" style="left:1433px">PROMO</span>
<span class="bm" style="left:1566px;font-size:17px;top:92px">»</span>

<!--TOOLBAR-END-->
<!--SIDEBAR-START-->
<div id="side" class="abs"></div>
<div id="side2" class="abs"></div>
<div id="search" class="abs"></div>
<!-- logo scooter -->
<svg class="abs" style="left:80px;top:138px" width="50" height="45" viewBox="0 0 1000 900"><rect x="195" y="340" width="172" height="192" fill="#a5abab"/><rect x="225" y="385" width="110" height="30" fill="#8b9393"/><path d="M180,682Q172,612 230,562Q262,535 330,535L372,535L380,503L432,503Q447,510 447,540L447,608Q452,630 482,630L578,630Q604,620 609,560L614,470Q619,443 640,449Q656,460 657,500L661,535L742,541Q802,572 822,652L822,682Z" fill="#ff6a22"/><path d="M180,682Q178,655 186,640L815,640Q822,660 822,682Z" fill="#ff5216"/><rect x="664" y="488" width="36" height="48" rx="6" fill="#a5abab"/><path d="M375,497L375,352L400,320L445,330L482,430L540,470L556,590L592,600L592,622L470,622L482,520L440,492Z" fill="#2b4450"/><path d="M428,348L562,374L556,410L448,386Z" fill="#e9e9e9"/><circle cx="600" cy="410" r="38" fill="#ffb4b6"/><ellipse cx="472" cy="285" rx="52" ry="42" fill="#ffc6c2"/><path d="M360,272Q352,160 440,155Q520,158 542,205L600,194Q608,214 590,226L520,252L520,272Z" fill="#ff5a1f"/><path d="M213,690A82,82 0 0 0 377,690Z" fill="#1f4a57"/><path d="M250,690A45,45 0 0 0 340,690Z" fill="#fff"/><path d="M638,690A82,82 0 0 0 802,690Z" fill="#1f4a57"/><path d="M675,690A45,45 0 0 0 765,690Z" fill="#fff"/></svg>
<div class="abs" style="left:143px;top:151px;font-size:17.500px;line-height:22px;color:#2b2b2b;white-space:nowrap" id="t_log">Logistics</div>
<svg class="abs" style="left:237px;top:150px" width="24" height="24" viewBox="0 0 24 24" fill="none" stroke="#3a3a3a" stroke-width="1.300"><path d="M6.500 6V2.700h16v14h-3.500"/><path d="M1.500 6.500h16.500l-1 15H2.800z"/><text x="9.500" y="18" font-size="11" font-weight="bold" fill="#3a3a3a" stroke="none" text-anchor="middle" font-family="Liberation Sans, sans-serif">?</text></svg>
<svg class="abs" style="left:271px;top:149px" width="22" height="24" viewBox="0 0 22 24" fill="none" stroke="#8f9aa0" stroke-width="1.300"><path d="M2 17.500c2-1.500 2.500-3.500 2.500-7.500a6.500 6.500 0 0 1 13 0c0 4 .500 6 2.500 7.500z"/><path d="M8.500 18.500a2.500 2.500 0 0 0 5 0"/><path d="M9.500 3.500a1.500 1.500 0 0 1 3 0"/></svg>
<div class="abs" style="left:101px;top:196px;width:196px;height:1px;background:#9aa3a7"></div>
<svg class="abs" style="left:100px;top:221px" width="21" height="20" viewBox="0 0 21 20" fill="none" stroke="#2b2b2b" stroke-width="1.200"><ellipse cx="10.500" cy="8" rx="5" ry="6.500"/><path d="M7.500 13.500c-1 2.500-4 3-6.500 5h19c-2.500-2-5.500-2.500-6.500-5"/></svg>
<div class="abs" style="left:136px;top:214px;font-size:13.200px;font-weight:bold;line-height:18px;color:#222;white-space:nowrap" id="t_user">aljazeeraland</div>
<div class="abs" style="left:136px;top:235px;font-size:11.600px;line-height:15px;color:#8a959a;white-space:nowrap" id="t_gmt">GMT +04:00</div>
<svg class="abs" style="left:267px;top:239px" width="12" height="7" viewBox="0 0 12 7"><path d="M1 .500h10L6 6z" fill="#111"/></svg>
<div class="abs" style="left:101px;top:266px;width:196px;height:1px;background:#9aa3a7"></div>
<!-- menu -->
<svg class="abs" style="left:100px;top:276px" width="20" height="20" viewBox="0 0 20 20" fill="none" stroke="#8f9aa0" stroke-width="1.200"><rect x="1.500" y="3" width="16.500" height="15.500"/><path d="M5.500 1v4M14 1v4M6.500 8v8M12.500 8v8M4 10.500h11.500M4 14h11.500"/></svg>
<div class="mi" style="top:278px">PLANNING</div>
<svg class="abs" style="left:100px;top:311px" width="21" height="21" viewBox="0 0 21 21"><path d="M10.500 1.500a5 5 0 0 1 5 5c0 3.500-5 8.500-5 8.500s-5-5-5-8.500a5 5 0 0 1 5-5z" fill="#111"/><circle cx="10.500" cy="6.300" r="2" fill="#cfd8dc"/><path d="M5.500 11.500h-1.500L1 19.500h19l-3-8h-1.500" fill="none" stroke="#111" stroke-width="1.300"/><path d="M5 17h3" stroke="#111" stroke-width="1"/></svg>
<div class="mi" style="top:314px;color:#111">ROUTES</div>
<svg class="abs" style="left:100px;top:348px" width="20" height="20" viewBox="0 0 20 20" fill="none" stroke="#8f9aa0" stroke-width="1.200"><rect x="1.500" y="1.500" width="16.500" height="17"/><path d="M6.500 15v-4M10 15V6M13.500 15v-6" stroke-width="2"/></svg>
<div class="mi" style="top:350px">REPORTS</div>
<svg class="abs" style="left:100px;top:383px" width="21" height="21" viewBox="0 0 21 21" fill="none" stroke="#8f9aa0" stroke-width="1.200"><path d="M1.500 2h17v13.500h-3.500v4l-4-4H1.500z"/><path d="M5 6.500h10M5 10h6.500" stroke-width="1.400"/></svg>
<div class="mi" style="top:386px">CHAT</div>
<!-- search -->
<svg class="abs" style="left:103.300px;top:444.500px" width="20" height="20" viewBox="0 0 20 20" fill="none" stroke="#fff" stroke-width="2"><circle cx="8" cy="8" r="5.500"/><path d="M12 12l6 6" stroke-width="2.400"/></svg>
<div class="abs" style="left:136px;top:443px;font-size:16px;line-height:22px;color:#fff;white-space:nowrap" id="t_search">Search</div>
<div class="abs" style="left:99px;top:495px;font-size:13px;line-height:16px;color:#8b9a9f;white-space:nowrap" id="t_rs">Route state</div>
<div class="abs" style="left:101px;top:515px;width:20px;height:20px;border-radius:50%;border:2px solid #0b9a2c"></div>
<div class="abs" style="left:106px;top:520px;width:10px;height:10px;border-radius:50%;background:#0b9a2c"></div>
<div class="abs" style="left:101px;top:539px;width:20px;height:20px;border-radius:50%;border:2px solid #9a9a9a"></div>
<div class="abs" style="left:101px;top:563px;width:20px;height:20px;border-radius:50%;border:2px solid #9a9a9a"></div>
<div class="abs" style="left:139px;top:517px;font-size:13px;line-height:16px;color:#222">Active</div>
<div class="abs" style="left:139px;top:541px;font-size:13px;line-height:16px;color:#222">Planning</div>
<div class="abs" style="left:139px;top:565px;font-size:13px;line-height:16px;color:#222">Fulfilled</div>

<!--SIDEBAR-END-->
<!--TABLE-START-->
<div id="tbl" class="abs card">
<span class="th" style="left:89px">Name</span>
<span class="th" style="left:239px">Arrival time</span>
<span class="th" style="left:439px">Mileage</span>
<span class="th" style="left:739px">Address</span>
<span class="th" style="left:918px">Phone</span>
<span class="th" style="left:1018px">Client</span>
<div class="vs" style="left:234px"></div>
<div class="vs" style="left:434px"></div>
<div class="vs" style="left:734px"></div>
<div class="vs" style="left:914px"></div>
<div class="vs" style="left:1014px"></div>
<div class="vs" style="left:1114px"></div>
<div style="position:absolute;left:0;top:35px;width:1254px;height:1px;background:#dcdcdc"></div>
<svg style="position:absolute;left:1236px;top:14px" width="4" height="14" viewBox="0 0 4 14"><circle cx="2" cy="2" r="1.400" fill="#222"/><circle cx="2" cy="7" r="1.400" fill="#222"/><circle cx="2" cy="12" r="1.400" fill="#222"/></svg>
<div class="row p x" style="top:36px"><svg class="chev" viewBox="0 0 11 9"><path d="M1 7.200L5.500 2.700 10 7.200" fill="none" stroke="#222" stroke-width="1.800"/></svg><div class="bdg">0/1</div><svg style="position:absolute;left:90px;top:10px" width="24" height="13" viewBox="0 0 24 13"><path d="M1 1.500Q1 .500 2 .500h13.500v3h4l3.500 3.500v3.500H1z" fill="#f0a020"/><rect x="2.500" y="2" width="2.600" height="3" fill="#5a4a3a"/><rect x="6" y="2" width="2.600" height="3" fill="#5a4a3a"/><rect x="9.500" y="2" width="2.600" height="3" fill="#5a4a3a"/><rect x="13" y="2" width="2" height="3" fill="#5a4a3a"/><path d="M16.500 4.500h2.800l2 2h-4.800z" fill="#5a4a3a"/><rect x="1" y="6.500" width="22" height="1.200" fill="#c97a10"/><circle cx="5.500" cy="10.500" r="2.200" fill="#444"/><circle cx="18" cy="10.500" r="2.200" fill="#444"/><circle cx="5.500" cy="10.500" r=".900" fill="#bbb"/><circle cx="18" cy="10.500" r=".900" fill="#bbb"/></svg><span style="left:119px">42HW</span><span style="left:237px">2019-02-20 13:38 <b>—</b> 13:38</span><span style="left:437px">0 m</span><span style="left:737px">4058 Way, Khaudh, Musc<i>…</i></span></div>
<div class="row g" style="top:66px"><div class="dot"></div><div class="num">1</div><span style="left:87px;top:8px">test</span><span style="left:237px">2019-02-20 13:38</span><span style="left:437px">0 m</span><span style="left:737px">Lajes das Flores, Portugal</span></div>
<div class="row p x" style="top:96px"><svg class="chev" viewBox="0 0 11 9"><path d="M1 7.200L5.500 2.700 10 7.200" fill="none" stroke="#222" stroke-width="1.800"/></svg><div class="bdg">0/1</div><svg style="position:absolute;left:90px;top:10px" width="24" height="13" viewBox="0 0 24 13"><path d="M1 1.500Q1 .500 2 .500h13.500v3h4l3.500 3.500v3.500H1z" fill="#f0a020"/><rect x="2.500" y="2" width="2.600" height="3" fill="#5a4a3a"/><rect x="6" y="2" width="2.600" height="3" fill="#5a4a3a"/><rect x="9.500" y="2" width="2.600" height="3" fill="#5a4a3a"/><rect x="13" y="2" width="2" height="3" fill="#5a4a3a"/><path d="M16.500 4.500h2.800l2 2h-4.800z" fill="#5a4a3a"/><rect x="1" y="6.500" width="22" height="1.200" fill="#c97a10"/><circle cx="5.500" cy="10.500" r="2.200" fill="#444"/><circle cx="18" cy="10.500" r="2.200" fill="#444"/><circle cx="5.500" cy="10.500" r=".900" fill="#bbb"/><circle cx="18" cy="10.500" r=".900" fill="#bbb"/></svg><span style="left:119px">42HW</span><span style="left:237px">10:29 <b>—</b> 10:29</span><span style="left:437px">0 m</span><span style="left:737px">4058 Way, Khaudh, Musc<i>…</i></span></div>
<div class="row g" style="top:126px"><div class="dot"></div><div class="num">1</div><span style="left:87px;top:8px">kugkjghkj</span><span style="left:237px">10:29</span><span style="left:437px">0 m</span><span style="left:737px">Albahais Street</span></div>
<div class="row p x" style="top:156px"><svg class="chev" viewBox="0 0 11 9"><path d="M1 7.200L5.500 2.700 10 7.200" fill="none" stroke="#222" stroke-width="1.800"/></svg><div class="bdg">0/1</div><svg style="position:absolute;left:77px;top:9px" width="9" height="13" viewBox="0 0 9 13"><path d="M4.500 1a3.500 3.500 0 0 1 3.500 3.500c0 2.500-3.500 6-3.500 6s-3.500-3.500-3.500-6A3.500 3.500 0 0 1 4.500 1z" fill="none" stroke="#222" stroke-width="1"/><circle cx="4.500" cy="4.500" r="1.200" fill="#222"/><path d="M2 12.300h5" stroke="#222" stroke-width="1"/></svg><svg style="position:absolute;left:90px;top:10px" width="24" height="13" viewBox="0 0 24 13"><path d="M1 1.500Q1 .500 2 .500h13.500v3h4l3.500 3.500v3.500H1z" fill="#f0a020"/><rect x="2.500" y="2" width="2.600" height="3" fill="#5a4a3a"/><rect x="6" y="2" width="2.600" height="3" fill="#5a4a3a"/><rect x="9.500" y="2" width="2.600" height="3" fill="#5a4a3a"/><rect x="13" y="2" width="2" height="3" fill="#5a4a3a"/><path d="M16.500 4.500h2.800l2 2h-4.800z" fill="#5a4a3a"/><rect x="1" y="6.500" width="22" height="1.200" fill="#c97a10"/><circle cx="5.500" cy="10.500" r="2.200" fill="#444"/><circle cx="18" cy="10.500" r="2.200" fill="#444"/><circle cx="5.500" cy="10.500" r=".900" fill="#bbb"/><circle cx="18" cy="10.500" r=".900" fill="#bbb"/></svg><span style="left:119px">104MR</span><span style="left:237px">2018-07-11 00:00 <b>—</b> 00:00</span><span style="left:437px">0 m</span><span style="left:737px">Al Khrais Street 139-147, <i>…</i></span></div>
<div class="row g" style="top:186px"><div class="dot"></div><div class="num">1</div><span style="left:87px;top:8px">FOOD</span><span style="left:237px">2018-07-11 00:00</span><span style="left:437px">0 m</span><span style="left:737px">10 Street 46-60, Mina Al F<i>…</i></span><span style="left:917px">+96890115967</span><span style="left:1017px">SJS</span></div>
<div class="row p x" style="top:216px"><svg class="chev" viewBox="0 0 11 9"><path d="M1 7.200L5.500 2.700 10 7.200" fill="none" stroke="#222" stroke-width="1.800"/></svg><div class="bdg">0/1</div><svg style="position:absolute;left:96px;top:4px" width="12" height="23" viewBox="0 0 12 23"><rect x="1" y=".500" width="10" height="22" rx="3.500" fill="#cf2a2c"/><path d="M2.300 5.500Q6 3.500 9.700 5.500l-.600 3h-6.200z" fill="#3c4240"/><rect x="2.800" y="8.500" width="6.400" height="8.500" rx="1" fill="#f3b9b9"/><rect x="4" y="9.500" width="4" height="6" fill="#fbe0e0"/><path d="M2.900 17.300h6.200l.500 2.200Q6 20.800 2.400 19.500z" fill="#3c4240"/><rect x="1" y="3" width="1.200" height="2.500" fill="#f3c8c8"/><rect x="9.800" y="3" width="1.200" height="2.500" fill="#f3c8c8"/><rect x="3.500" y="20.800" width="5" height="1" fill="#8a1a20"/></svg><span style="left:119px">286YS</span><svg style="position:absolute;left:1222px;top:6px" width="14" height="17" viewBox="0 0 14 17" fill="none" stroke="#222" stroke-width="1.200"><path d="M1 3.500h12M4.500 3.500V1.500h5v2M2.200 5.500h9.600V16H2.200zM5 7.500v6.500M7 7.500v6.500M9 7.500v6.500"/></svg><span style="left:237px">2018-10-09 16:04 <b>—</b> 16:04</span><span style="left:437px">0 m</span><span style="left:737px">Rt-13, Barka, Al Batinah S<i>…</i></span></div>
<div class="row g" style="top:246px"><div class="dot"></div><div class="num">1</div><span style="left:87px;top:8px">Post1</span><span style="left:237px">2018-10-09 16:04</span><span style="left:437px">0 m</span><span style="left:737px">8652 Way 708-778, Musc<i>…</i></span><span style="left:917px">+96899999999</span><span style="left:1017px">Isa</span></div>
<div class="row p" style="top:276px"><svg class="chev" viewBox="0 0 11 9"><path d="M1 2.200L5.500 6.700 10 2.200" fill="none" stroke="#222" stroke-width="1.800"/></svg><div class="bdg o">0/1</div><svg style="position:absolute;left:90px;top:10px" width="24" height="13" viewBox="0 0 24 13"><path d="M1 1.500Q1 .500 2 .500h13.500v3h4l3.500 3.500v3.500H1z" fill="#f0a020"/><rect x="2.500" y="2" width="2.600" height="3" fill="#5a4a3a"/><rect x="6" y="2" width="2.600" height="3" fill="#5a4a3a"/><rect x="9.500" y="2" width="2.600" height="3" fill="#5a4a3a"/><rect x="13" y="2" width="2" height="3" fill="#5a4a3a"/><path d="M16.500 4.500h2.800l2 2h-4.800z" fill="#5a4a3a"/><rect x="1" y="6.500" width="22" height="1.200" fill="#c97a10"/><circle cx="5.500" cy="10.500" r="2.200" fill="#444"/><circle cx="18" cy="10.500" r="2.200" fill="#444"/><circle cx="5.500" cy="10.500" r=".900" fill="#bbb"/><circle cx="18" cy="10.500" r=".900" fill="#bbb"/></svg><span style="left:119px">344MR</span><span style="left:237px">10:28 <b>—</b> 10:28</span><span style="left:437px">0 m</span><span style="left:737px">4058 Way, Khaudh, Musc<i>…</i></span></div>
<div class="row p" style="top:306px;height:29px;border-bottom:none"><svg class="chev" viewBox="0 0 11 9"><path d="M1 2.200L5.500 6.700 10 2.200" fill="none" stroke="#222" stroke-width="1.800"/></svg><div class="bdg o">0/1</div><svg style="position:absolute;left:96px;top:4px" width="12" height="23" viewBox="0 0 12 23"><rect x="1" y=".500" width="10" height="22" rx="3.500" fill="#cf2a2c"/><path d="M2.300 5.500Q6 3.500 9.700 5.500l-.600 3h-6.200z" fill="#3c4240"/><rect x="2.800" y="8.500" width="6.400" height="8.500" rx="1" fill="#f3b9b9"/><rect x="4" y="9.500" width="4" height="6" fill="#fbe0e0"/><path d="M2.900 17.300h6.200l.500 2.200Q6 20.800 2.400 19.500z" fill="#3c4240"/><rect x="1" y="3" width="1.200" height="2.500" fill="#f3c8c8"/><rect x="9.800" y="3" width="1.200" height="2.500" fill="#f3c8c8"/><rect x="3.500" y="20.800" width="5" height="1" fill="#8a1a20"/></svg><span style="left:119px">21497A</span><span style="left:237px">2017-09-25 23:51 <b>—</b> 23:51</span><span style="left:437px">0 m</span><span style="left:737px">Ghala Street 3-15, Al Udha<i>…</i></span></div>
<div style="position:absolute;left:235px;top:334px;width:1020px;height:1px;background:#e3e3e3"></div>
</div>
<!--TABLE-END-->
<!--INFO-START-->
<div id="info" class="abs card">
  <div style="position:absolute;left:0;top:0;width:370px;height:38px;background:#eceff1;border-bottom:1px solid #d3d8db"></div>
  <svg style="position:absolute;left:11px;top:9px" width="20" height="20" viewBox="0 0 21 21"><path d="M10.500 1.500a5 5 0 0 1 5 5c0 3.500-5 8.500-5 8.500s-5-5-5-8.500a5 5 0 0 1 5-5z" fill="#222"/><circle cx="10.500" cy="6.300" r="2" fill="#eceff1"/><path d="M5.500 11.500h-1.500L1 19.500h19l-3-8h-1.500" fill="none" stroke="#222" stroke-width="1.300"/><path d="M5 17h3" stroke="#222" stroke-width="1"/></svg>
  <span class="lb" style="left:36px;top:11.700px;color:#333;font-size:12.400px">286YS</span>
  <span class="lb" style="top:51px">Orders</span><span class="vl" style="top:69px">1</span>
  <span class="lb" style="top:96px">Estimated route duration</span><span class="vl" style="top:114px">0 h 00 min</span>
  <span class="lb" style="top:141px">Actual route duration</span><span class="vl" style="top:159px">0 h 00 min</span>
  <span class="lb" style="top:186px">Estimated mileage</span><span class="vl" style="top:204px">0 m</span>
  <span class="lb" style="top:231px">Cost</span><span class="vl" style="top:249px">50</span>
  <span class="lb" style="top:231px;left:134px">Weight</span><span class="vl" style="top:249px;left:134px">5 kg</span>
  <span class="lb" style="top:231px;left:256px">Volume</span><span class="vl" style="top:249px;left:256px">2</span>
  <span class="lb" style="top:276px">Driver</span>
  <div class="btn" style="left:198px">.XLSX</div>
  <div class="btn" style="left:240px">.PDF</div>
  <div class="btn" style="left:282px"><svg style="position:absolute;left:9px;top:10px" width="18" height="16" viewBox="0 0 18 16"><rect x="4.500" y="1" width="9" height="3.500" fill="#7f9dab"/><path d="M1 5.500h16v7h-3v-3H4v3H1z" fill="#7f9dab"/><rect x="5.500" y="10.500" width="7" height="4.500" fill="none" stroke="#7f9dab" stroke-width="1.500"/></svg></div>
  <div class="btn" style="left:324px"><svg style="position:absolute;left:12px;top:9px" width="13" height="17" viewBox="0 0 13 17"><path d="M0 2.800h4V1.300h5v1.500h4v1.700H0z" fill="#7f9dab"/><rect x="4.800" y="2" width="3.400" height="1" fill="#fff"/><path d="M1 4.500h11V17H1z" fill="#7f9dab"/><path d="M4 6v9.500M6.500 6v9.500M9 6v9.500" stroke="#dfe7eb" stroke-width="1.100"/></svg></div>
</div>

<!--INFO-END-->
<!--MAP-START-->
<div class="abs" style="left:965px;top:511px;width:9px;height:3px"><svg width="9" height="3" viewBox="0 0 9 3"><circle cx="1.200" cy="1.500" r="1" fill="#222"/><circle cx="4.500" cy="1.500" r="1" fill="#222"/><circle cx="7.800" cy="1.500" r="1" fill="#222"/></svg></div>
<div id="map" class="abs"><div style="position:absolute;left:-1px;top:0;width:871px;height:371px">
<svg width="871" height="371" viewBox="716 518 871 371" style="position:absolute;left:0;top:0">
<rect x="716" y="518" width="871" height="371" fill="#e1ecd0"/>
<g stroke="#b7aaa0" stroke-width=".55" stroke-linejoin="round">
<path d="M792.0,514.0 792.0,520.0 796.0,530.0 820.0,540.0 836.0,541.0 856.0,542.0 876.0,542.0 896.0,544.0 898.4,543.4 904.0,542.0 905.0,536.0 907.0,531.0 915.0,530.0 936.0,528.0 956.0,529.0 972.0,524.0 982.0,522.0 996.0,518.0 996.0,514.0Z" fill="#fffadc"/>
<path d="M774.0,598.0 896.0,598.0 886.0,597.0 882.0,605.0 886.0,624.0 888.0,631.0 885.6,646.0 884.0,650.0 892.0,674.0 906.0,698.0 912.0,708.0 920.0,720.0 922.0,724.0 774.0,724.0 775.0,698.0 774.0,634.0 771.0,622.0 773.0,604.0Z" fill="#d7d4e4"/>
<path d="M887.0,581.4 893.0,581.0 898.0,579.0 897.4,585.0 895.0,588.0 894.0,595.0 895.0,602.0 892.0,612.0 888.0,632.0 885.0,618.0 880.0,606.0 884.0,598.0 886.0,588.0Z" fill="#e4f9f8"/>
<path d="M899.4,561.0 904.0,562.0 905.4,566.0 903.0,571.0 900.0,574.0 898.0,579.0 893.0,581.0 889.0,581.4 890.0,578.0 893.0,571.0 896.0,565.0Z" fill="#fffadc"/>
<path d="M895.0,588.0 899.0,584.0 908.0,591.0 916.0,587.0 932.0,578.0 936.0,592.0 918.0,597.0 913.0,598.0 916.0,608.0 922.0,616.0 914.0,622.0 904.0,630.0 898.0,633.0 888.0,632.0 891.0,612.0 890.0,602.0 892.0,592.0Z" fill="#fffadc"/>
<path d="M972.0,524.0 984.0,522.0 996.0,525.0 1000.0,530.0 1006.0,538.0 1014.0,544.0 1012.0,550.0 1008.0,558.0 1006.0,568.0 1010.0,576.0 1022.0,586.0 1030.0,594.0 1033.0,602.0 1036.0,608.0 1041.0,622.0 1030.0,622.0 1022.0,634.0 1000.0,633.0 984.0,618.0 966.0,606.0 948.0,597.0 936.0,595.0 936.0,592.0 932.0,578.0 956.0,561.0 959.0,550.0 961.0,535.0 971.0,527.0Z" fill="#e4f9f8"/>
<path d="M1022.0,634.0 1030.0,622.0 1042.0,622.0 1044.0,630.0 1041.0,638.0 1036.0,640.0 1028.0,635.0Z" fill="#d7d4e4"/>
<path d="M1174.0,514.0 1174.0,518.0 1176.0,530.0 1186.0,536.0 1188.0,548.0 1198.0,553.0 1207.0,549.0 1209.0,544.0 1219.0,540.0 1225.0,535.0 1227.0,527.0 1237.0,524.0 1239.0,519.4 1244.0,522.0 1247.0,522.4 1247.0,514.0Z" fill="#d7d4e4"/>
<path d="M1247.0,514.0 1247.0,522.4 1262.0,525.0 1262.0,514.0Z" fill="#e4f9f8"/>
<path d="M1102.0,514.0 1105.0,524.0 1113.0,520.0 1116.0,514.0Z" fill="#d7d4e4"/>
<path d="M1188.0,548.0 1198.0,553.0 1207.0,549.0 1209.0,544.0 1219.0,540.0 1225.0,535.0 1227.0,527.0 1237.0,524.0 1239.0,519.4 1244.0,522.0 1247.0,522.4 1262.0,525.0 1266.0,528.0 1273.0,525.0 1280.0,524.0 1282.0,519.4 1286.0,519.0 1290.0,521.0 1303.0,518.0 1304.0,531.4 1310.0,529.0 1317.0,524.0 1324.0,521.0 1332.0,522.4 1340.0,521.0 1344.0,522.4 1337.0,526.0 1330.0,528.0 1320.0,530.0 1313.0,532.0 1307.0,535.0 1301.0,540.0 1304.0,552.0 1298.0,558.0 1296.0,568.0 1290.0,570.0 1288.0,580.0 1280.0,584.0 1276.0,598.0 1262.0,604.0 1256.0,610.0 1246.0,612.0 1244.0,624.0 1228.0,628.0 1212.0,630.0 1196.0,629.0 1184.0,626.0 1192.0,614.0 1194.0,606.0 1184.0,602.0 1180.0,586.0 1182.0,576.0 1179.0,570.0 1180.0,566.0 1188.0,556.0Z" fill="#fffadc"/>
<path d="M1184.0,626.0 1196.0,629.0 1212.0,630.0 1228.0,628.0 1244.0,624.0 1246.0,612.0 1256.0,610.0 1262.0,604.0 1276.0,598.0 1280.0,584.0 1288.0,580.0 1290.0,570.0 1296.0,568.0 1298.0,558.0 1304.0,552.0 1301.0,540.0 1307.0,535.0 1313.0,532.0 1320.0,530.0 1330.0,528.0 1329.0,530.0 1321.0,531.0 1320.0,535.0 1315.0,539.0 1317.0,544.0 1324.0,547.0 1329.0,550.0 1332.0,554.0 1330.0,559.0 1326.0,562.0 1325.0,570.0 1344.0,588.0 1346.0,594.0 1338.0,598.0 1340.0,606.0 1332.0,612.0 1330.0,624.0 1322.0,632.0 1314.0,640.0 1310.0,646.0 1294.0,650.0 1286.0,656.0 1280.4,660.0 1281.0,664.6 1288.0,667.6 1288.0,674.0 1290.0,678.0 1293.4,678.6 1295.0,684.0 1298.0,690.0 1298.4,694.0 1296.0,696.0 1293.0,694.6 1286.0,697.0 1280.0,695.6 1272.4,695.6 1271.4,699.4 1266.0,701.0 1256.0,704.0 1192.0,704.0 1192.0,678.0 1196.0,670.0 1209.0,666.0 1206.0,658.0 1206.0,648.0 1200.0,642.0 1188.0,634.0Z" fill="#e4f9f8"/>
<path d="M1344.0,514.0 1344.0,518.0 1348.0,528.0 1360.0,538.0 1372.0,548.0 1390.0,543.0 1404.0,550.0 1396.0,564.0 1388.0,572.0 1390.0,586.0 1382.0,590.0 1386.0,602.0 1396.0,610.0 1412.0,621.0 1420.0,618.0 1432.0,626.0 1446.0,634.0 1454.0,642.0 1472.0,649.0 1486.0,651.0 1500.0,648.0 1502.0,654.0 1510.0,646.0 1520.0,645.0 1530.0,648.0 1538.0,652.0 1548.0,646.0 1560.0,638.0 1574.0,636.0 1582.0,631.0 1592.0,634.0 1592.0,514.0Z" fill="#d7d4e4"/>
<path d="M1412.0,621.0 1420.0,618.0 1432.0,626.0 1446.0,634.0 1454.0,642.0 1472.0,649.0 1486.0,651.0 1492.0,650.0 1492.0,666.0 1484.0,668.0 1468.0,664.0 1450.0,658.0 1432.0,654.0 1420.0,646.0 1408.0,640.0 1401.0,636.0 1406.0,626.0Z" fill="#e4f9f8"/>
<path d="M1500.0,657.0 1504.0,652.0 1510.0,648.0 1514.0,645.4 1520.0,647.0 1526.0,650.0 1532.0,651.0 1534.0,656.0 1537.0,659.0 1535.0,663.0 1530.0,664.0 1520.0,665.0 1510.0,666.0 1504.0,664.0Z" fill="#fffadc"/>
<path d="M1493.0,673.0 1500.0,671.0 1510.0,673.0 1511.4,682.0 1520.0,684.0 1530.0,686.0 1541.0,687.0 1539.0,692.0 1536.0,696.0 1530.0,699.0 1528.0,704.0 1529.0,710.0 1534.0,706.0 1539.0,704.0 1541.0,712.0 1543.0,720.0 1545.0,730.0 1544.0,735.0 1537.0,736.0 1535.0,730.0 1520.0,732.0 1500.0,732.0 1502.0,723.0 1503.0,719.0 1500.0,712.0 1498.0,705.0 1500.0,700.0 1496.0,696.0 1492.0,690.0 1496.0,685.0 1501.0,683.0 1496.0,679.0Z" fill="#e4f9f8"/>
<path d="M1592.0,656.0 1587.0,658.0 1580.0,663.0 1573.0,667.0 1570.0,676.0 1566.0,685.0 1564.0,694.0 1558.0,700.0 1553.0,701.0 1552.0,710.0 1549.0,718.0 1546.0,724.0 1544.0,730.0 1544.0,734.0 1538.0,736.0 1536.0,748.0 1550.0,768.0 1560.0,798.0 1560.0,810.0 1592.0,810.0 1592.0,678.0Z" fill="#fffadc"/>
<path d="M712.0,729.0 762.0,754.0 763.0,799.0 752.0,800.0 751.0,812.0 744.0,816.0 742.0,826.0 739.0,832.0 744.0,838.0 746.0,846.0 750.0,856.0 742.0,856.0 732.0,864.0 724.0,874.0 712.0,882.0Z" fill="#e4f9f8"/>
<path d="M774.0,724.0 909.0,724.0 922.0,724.0 926.0,738.0 932.0,758.0 930.0,770.0 928.0,772.0 924.0,777.0 916.0,781.0 911.0,784.0 910.0,792.0 906.0,810.0 905.0,822.0 900.0,834.0 892.0,838.0 886.0,848.0 882.0,856.0 878.0,868.0 876.0,872.0 874.0,858.0 868.0,856.0 866.0,841.0 862.0,841.0 856.0,844.0 860.0,854.0 854.0,864.0 844.0,868.0 832.0,864.0 822.0,872.0 816.0,875.0 804.0,872.0 794.0,870.0 784.0,863.0 774.0,866.0 770.0,874.0 769.0,890.0 758.0,890.0 759.0,868.0 754.0,858.0 750.0,856.0 746.0,846.0 744.0,838.0 739.0,832.0 742.0,826.0 744.0,816.0 751.0,812.0 752.0,800.0 763.0,799.0 763.0,749.0 774.0,746.0Z" fill="#fffadc"/>
<path d="M769.0,890.0 770.0,874.0 774.0,866.0 784.0,863.0 794.0,870.0 804.0,872.0 816.0,875.0 822.0,872.0 832.0,864.0 844.0,868.0 854.0,864.0 860.0,854.0 856.0,844.0 862.0,841.0 866.0,841.0 868.0,856.0 874.0,858.0 876.0,872.0 879.0,890.0Z" fill="#e4f9f8"/>
<path d="M911.0,784.0 916.0,781.0 924.0,777.0 928.0,772.0 936.0,770.0 942.0,778.0 960.0,802.0 968.0,818.0 979.0,832.0 978.0,836.0 970.0,836.0 962.0,828.0 952.0,820.0 936.0,816.0 906.0,816.0 906.0,810.0 910.0,792.0Z" fill="#e4f9f8"/>
<path d="M966.0,846.0 970.0,836.0 978.0,836.0 984.0,837.0 986.0,846.0 984.0,852.0 988.0,856.0 974.0,864.0 966.0,856.0Z" fill="#d7d4e4"/>
<path d="M974.0,864.0 986.0,856.0 996.0,854.0 1016.0,850.0 1036.0,846.0 1076.0,838.0 1096.0,838.0 1096.0,895.0 1040.0,895.0 1024.0,889.0 1010.0,885.0 992.0,879.0 983.0,872.0Z" fill="#e4f9f8"/>
<path d="M974.0,792.0 976.0,790.0 982.0,780.0 992.0,778.0 1006.0,780.0 1022.0,784.0 1032.0,778.0 1036.0,774.0 1056.0,766.0 1082.0,762.0 1094.0,788.0 1092.0,802.0 1066.0,818.0 1036.0,828.0 1016.0,834.0 996.0,842.0 985.0,840.0 982.0,830.0 976.0,818.0 972.0,806.0Z" fill="#fffadc"/>
<path d="M1126.0,688.0 1124.0,690.0 1126.0,698.0 1122.0,703.0 1120.0,710.0 1116.0,716.0 1122.0,724.0 1120.0,736.0 1112.0,750.0 1082.0,762.0 1094.0,788.0 1094.0,818.0 1196.0,758.0 1196.0,686.0Z" fill="#e4f9f8"/>
<path d="M1128.4,675.0 1129.6,671.0 1133.0,670.0 1134.0,678.0 1132.8,682.4 1129.0,681.0Z" fill="#e4f9f8"/>
<path d="M1077.0,695.0 1086.0,700.0 1096.0,698.0 1108.0,698.0 1114.0,691.0 1121.0,685.0 1126.0,679.0 1128.4,675.0 1129.0,681.0 1132.8,682.4 1133.6,689.6 1128.0,688.0 1124.0,690.0 1126.0,698.0 1122.0,703.0 1120.0,710.0 1116.0,716.0 1086.0,712.0Z" fill="#fffadc"/>
</g>
<g fill="#a6cefa" stroke="#9db6d2" stroke-width=".4">
<path d="M712.0,514.0 799.0,514.0 799.0,518.0 803.0,523.0 800.0,526.0 805.0,528.0 811.0,527.0 808.0,530.0 813.0,530.0 818.0,533.0 822.0,536.4 828.0,539.0 834.0,537.4 837.0,534.0 839.0,530.0 845.0,530.0 852.0,532.4 856.0,536.0 860.0,539.4 865.0,540.0 872.0,539.0 877.0,536.0 880.0,533.0 884.0,530.4 890.0,531.0 895.0,532.4 900.0,529.0 901.4,530.4 899.0,535.0 898.0,540.0 898.4,544.0 897.4,548.0 898.4,555.0 899.4,561.0 898.0,565.0 895.0,571.0 892.0,578.0 891.0,581.4 889.0,587.0 887.0,593.0 886.0,600.0 883.6,605.4 876.0,606.0 864.0,608.0 856.0,607.0 852.0,604.0 844.0,602.0 836.0,604.0 828.0,608.0 820.0,611.0 802.0,606.0 784.0,603.0 774.0,602.0 774.0,598.0 762.0,595.0 750.0,588.0 742.0,585.0 728.0,585.0 712.0,587.0Z"/>
<path d="M1048.0,514.0 1048.0,518.0 1056.0,522.0 1064.0,526.0 1076.0,531.0 1088.0,531.0 1100.0,528.0 1105.0,524.0 1104.0,518.0 1104.0,514.0Z"/>
<path d="M859.0,624.0 859.0,630.0 863.0,640.0 870.0,649.0 874.0,656.0 878.0,662.0 882.0,672.0 887.0,680.0 892.0,690.0 895.0,698.0 896.0,708.0 902.0,716.0 909.0,724.0 912.0,734.0 914.0,748.0 916.0,758.0 924.0,768.0 928.0,772.0 932.0,782.0 938.0,796.0 944.0,806.0 954.0,816.0 964.0,826.0 974.0,834.0 983.0,838.0 984.0,846.0 980.0,852.0 986.0,856.0 993.0,861.0 1000.0,861.4 1008.0,859.0 1016.0,858.0 1024.0,856.0 1030.0,853.4 1040.0,852.0 1050.0,851.0 1060.0,849.0 1066.0,844.0 1071.0,844.4 1073.0,847.0 1072.0,854.0 1071.0,860.0 1070.0,865.0 1068.0,874.0 1064.0,880.0 1060.0,887.0 1057.0,895.0 1065.0,895.0 1364.0,894.0 1362.0,878.0 1360.0,874.0 1356.0,862.0 1348.0,844.0 1340.0,826.0 1332.0,808.0 1326.0,792.0 1322.0,774.0 1318.0,756.0 1319.0,742.0 1319.4,741.0 1318.0,736.0 1317.0,730.0 1321.4,727.4 1316.0,724.0 1318.0,721.0 1312.0,721.0 1313.0,723.0 1310.0,726.4 1312.0,730.0 1310.0,733.4 1304.0,737.0 1297.0,739.4 1294.0,739.0 1288.0,735.0 1282.0,729.0 1277.0,724.0 1275.0,720.0 1280.0,719.4 1286.0,718.0 1290.0,715.0 1292.0,711.0 1286.0,713.0 1280.0,714.4 1274.0,712.0 1270.0,708.0 1267.0,704.0 1266.0,701.0 1263.0,701.4 1259.0,700.0 1256.0,696.0 1254.0,690.0 1249.0,687.6 1248.0,682.4 1244.0,679.6 1238.0,681.6 1230.0,683.0 1226.0,683.0 1206.0,684.0 1190.0,686.0 1175.0,684.0 1162.0,681.0 1150.0,679.0 1141.0,676.0 1139.0,667.0 1136.0,661.0 1129.0,660.0 1120.0,664.0 1112.0,667.0 1100.0,664.0 1091.0,659.0 1086.0,654.0 1077.0,650.0 1073.0,645.0 1069.0,637.0 1065.0,628.0 1060.0,620.0 1050.0,622.0 1048.0,618.0 1041.0,622.0 1037.0,627.0 1041.0,630.0 1043.0,645.0 1048.0,654.0 1054.0,660.0 1059.0,665.0 1060.0,674.0 1064.0,679.0 1066.0,684.0 1068.0,690.0 1074.0,694.0 1078.0,697.0 1086.0,699.0 1096.0,696.0 1102.0,697.4 1108.0,696.0 1113.0,690.0 1120.0,684.0 1125.0,678.0 1129.0,674.0 1131.0,671.0 1131.6,676.0 1131.0,682.0 1132.0,686.0 1134.0,690.0 1136.0,694.0 1139.0,698.0 1142.0,700.0 1148.0,700.0 1160.0,698.0 1168.0,702.0 1174.0,710.0 1172.0,716.0 1166.0,726.0 1160.0,734.0 1154.0,741.0 1148.0,746.0 1147.0,758.0 1140.0,762.0 1134.0,766.0 1128.0,772.0 1120.0,776.0 1116.0,782.0 1104.0,784.0 1094.0,788.0 1086.0,794.0 1082.0,802.0 1066.0,810.0 1050.0,816.0 1042.0,820.0 1036.0,819.0 1030.0,821.4 1024.0,823.4 1016.0,826.0 1010.0,828.0 1002.0,832.0 995.0,835.4 985.0,835.0 984.0,830.0 980.0,818.0 974.0,806.0 978.0,802.0 976.0,790.0 970.0,778.0 960.0,764.0 952.0,750.0 946.0,738.0 936.0,728.0 934.0,716.0 928.0,706.0 920.0,698.0 918.0,696.0 914.0,688.0 908.0,678.0 902.0,668.0 896.0,658.0 890.0,648.0 885.0,646.0 886.0,638.0 888.0,631.0 886.0,638.0 882.0,648.0 879.0,651.0 874.0,648.0 869.0,642.0 864.0,633.0 861.0,625.0Z"/>
<path d="M1364.0,894.0 1388.0,876.0 1392.0,864.0 1398.0,850.0 1400.0,838.0 1404.0,826.0 1401.0,818.0 1402.0,806.0 1408.0,798.0 1416.0,792.0 1426.0,786.0 1432.0,778.0 1444.0,770.0 1454.0,758.0 1462.0,751.0 1472.0,748.0 1478.0,742.0 1480.0,732.0 1490.0,726.0 1494.0,728.0 1500.0,726.0 1504.0,728.0 1510.0,723.0 1516.0,726.0 1523.0,720.0 1530.0,717.0 1534.0,720.0 1536.0,730.0 1538.0,733.0 1542.0,740.0 1550.0,748.0 1558.0,756.0 1556.0,762.0 1562.0,766.0 1565.0,778.0 1564.0,788.0 1566.0,798.0 1574.0,802.0 1592.0,802.0 1592.0,894.0Z"/>
</g>
<g stroke="#a9ad98" stroke-width=".4">
<path d="M1068.0,684.0 1070.0,676.0 1072.0,672.4 1075.0,673.0 1076.4,678.0 1076.0,688.0 1074.0,692.0 1069.6,690.8Z" fill="#d7d4e4"/>
<path d="M857.0,557.0 860.0,554.0 865.0,552.4 870.0,551.0 876.0,549.0 883.0,546.0 879.0,550.0 875.0,553.4 877.0,555.0 873.0,556.0 868.0,557.0 863.0,559.0 859.0,558.4Z" fill="#e4f9f8"/>
<path d="M758.0,549.0 762.0,547.0 768.0,549.0 776.0,550.0 783.0,551.0 789.0,551.4 788.4,554.0 783.0,555.0 776.0,556.0 772.0,554.4 765.0,552.0 760.0,551.4Z" fill="#e4f9f8"/>
<path d="M735.0,516.0 743.0,516.0 741.6,526.0 736.0,527.2Z" fill="#e4f9f8"/>
<path d="M805.4,538.4 811.0,535.4 810.0,539.0 806.4,542.4Z" fill="#e4f9f8"/>
<path d="M798.4,544.0 800.0,544.4 799.4,549.4 798.0,549.0Z" fill="#e4f9f8"/>
<path d="M765.0,524.0 767.8,523.6 768.0,525.0 765.4,525.4Z" fill="#e4f9f8"/>
<path d="M756.0,528.8 758.2,528.4 758.4,529.2 756.4,529.6Z" fill="#e4f9f8"/>
<path d="M772.4,526.8 775.2,526.4 775.4,528.0 772.8,528.4Z" fill="#e4f9f8"/>
<path d="M777.4,530.8 779.4,530.4 779.6,531.6 777.8,532.0Z" fill="#e4f9f8"/>
<path d="M784.4,528.4 786.8,528.0 787.0,530.0 784.8,530.4Z" fill="#e4f9f8"/>
<path d="M796.4,528.4 799.6,528.0 799.8,530.0 796.8,530.4Z" fill="#e4f9f8"/>
<path d="M788.4,532.4 790.8,532.0 791.0,533.4 788.8,533.8Z" fill="#e4f9f8"/>
<path d="M769.0,534.0 770.0,533.6 770.2,534.8 769.4,535.2Z" fill="#e4f9f8"/>
<path d="M760.4,524.0 761.8,523.6 762.0,524.2 760.8,524.6Z" fill="#e4f9f8"/>
<path d="M793.0,522.8 795.4,522.4 795.6,523.6 793.4,524.0Z" fill="#e4f9f8"/>
<path d="M1398.0,870.0 1404.0,869.0 1410.0,876.0 1412.0,890.0 1392.0,890.0 1395.0,876.0Z" fill="#fffadc"/>
<path d="M1097.0,836.0 1104.0,835.0 1109.0,837.0 1104.0,839.0 1098.0,838.4Z" fill="#fffadc"/>
<path d="M1547.0,826.0 1549.0,826.0 1548.4,838.0 1546.4,850.0 1544.0,848.0 1545.2,836.0Z" fill="#e1ecd0"/>
<path d="M1541.0,857.0 1543.6,856.0 1543.0,860.0 1541.2,860.0Z" fill="#e1ecd0"/>
</g>
<g font-family="DejaVu Sans, sans-serif" font-size="9.500" text-anchor="middle" fill="#000">
<circle cx="869.0" cy="553.0" r="3.250" fill="#fff" fill-opacity=".85" stroke="#1c2444" stroke-width="1.050"/><circle cx="869.0" cy="553.0" r="1.250" fill="#1c2444"/>
<text x="869.0" y="565.2" paint-order="stroke" stroke="#fff" stroke-width="2" stroke-opacity=".85" stroke-linejoin="round" >Nicosia</text>
<circle cx="897.6" cy="597.0" r="3.250" fill="#fff" fill-opacity=".85" stroke="#1c2444" stroke-width="1.050"/><circle cx="897.6" cy="597.0" r="1.250" fill="#1c2444"/>
<text x="898.0" y="609.4" paint-order="stroke" stroke="#fff" stroke-width="2" stroke-opacity=".85" stroke-linejoin="round" >Amman</text>
<circle cx="845.0" cy="621.0" r="3.250" fill="#fff" fill-opacity=".85" stroke="#1c2444" stroke-width="1.050"/><circle cx="845.0" cy="621.0" r="1.250" fill="#1c2444"/>
<text x="845.0" y="634.2" paint-order="stroke" stroke="#fff" stroke-width="2" stroke-opacity=".85" stroke-linejoin="round" >Cairo</text>
<circle cx="995.0" cy="578.0" r="3.250" fill="#fff" fill-opacity=".85" stroke="#1c2444" stroke-width="1.050"/><circle cx="995.0" cy="578.0" r="1.250" fill="#1c2444"/>
<text x="995.6" y="591.2" paint-order="stroke" stroke="#fff" stroke-width="2" stroke-opacity=".85" stroke-linejoin="round" >Baghdad</text>
<circle cx="1033.6" cy="632.0" r="3.250" fill="#fff" fill-opacity=".85" stroke="#1c2444" stroke-width="1.050"/><circle cx="1033.6" cy="632.0" r="1.250" fill="#1c2444"/>
<text x="1034.5" y="644.4" paint-order="stroke" stroke="#fff" stroke-width="2" stroke-opacity=".85" stroke-linejoin="round" >Kuwait</text>
<circle cx="1023.0" cy="691.0" r="3.250" fill="#fff" fill-opacity=".85" stroke="#1c2444" stroke-width="1.050"/><circle cx="1023.0" cy="691.0" r="1.250" fill="#1c2444"/>
<text x="1022.0" y="704.4" paint-order="stroke" stroke="#fff" stroke-width="2" stroke-opacity=".85" stroke-linejoin="round" >Riyadh</text>
<circle cx="1075.0" cy="544.0" r="3.250" fill="#fff" fill-opacity=".85" stroke="#1c2444" stroke-width="1.050"/><circle cx="1075.0" cy="544.0" r="1.250" fill="#1c2444"/>
<text x="1075.0" y="556.4" paint-order="stroke" stroke="#fff" stroke-width="2" stroke-opacity=".85" stroke-linejoin="round" >Tehran</text>
<circle cx="1065.0" cy="673.0" r="3.250" fill="#fff" fill-opacity=".85" stroke="#1c2444" stroke-width="1.050"/><circle cx="1065.0" cy="673.0" r="1.250" fill="#1c2444"/>
<text x="1065.0" y="685.4" paint-order="stroke" stroke="#fff" stroke-width="2" stroke-opacity=".85" stroke-linejoin="round" >Manama</text>
<circle cx="1276.0" cy="561.0" r="3.250" fill="#fff" fill-opacity=".85" stroke="#1c2444" stroke-width="1.050"/><circle cx="1276.0" cy="561.0" r="1.250" fill="#1c2444"/>
<text x="1276.0" y="573.8" paint-order="stroke" stroke="#fff" stroke-width="2" stroke-opacity=".85" stroke-linejoin="round" >Kabul</text>
<circle cx="1321.0" cy="573.0" r="3.250" fill="#fff" fill-opacity=".85" stroke="#1c2444" stroke-width="1.050"/><circle cx="1321.0" cy="573.0" r="1.250" fill="#1c2444"/>
<text x="1321.0" y="585.8" paint-order="stroke" stroke="#fff" stroke-width="2" stroke-opacity=".85" stroke-linejoin="round" >Islamabad</text>
<circle cx="1368.0" cy="641.0" r="3.250" fill="#fff" fill-opacity=".85" stroke="#1c2444" stroke-width="1.050"/><circle cx="1368.0" cy="641.0" r="1.250" fill="#1c2444"/>
<text x="1368.0" y="653.2" paint-order="stroke" stroke="#fff" stroke-width="2" stroke-opacity=".85" stroke-linejoin="round" >New Delhi</text>
<circle cx="1459.6" cy="652.0" r="3.250" fill="#fff" fill-opacity=".85" stroke="#1c2444" stroke-width="1.050"/><circle cx="1459.6" cy="652.0" r="1.250" fill="#1c2444"/>
<text x="1460.0" y="664.8" paint-order="stroke" stroke="#fff" stroke-width="2" stroke-opacity=".85" stroke-linejoin="round" >Kathmandu</text>
<circle cx="1510.0" cy="656.0" r="3.250" fill="#fff" fill-opacity=".85" stroke="#1c2444" stroke-width="1.050"/><circle cx="1510.0" cy="656.0" r="1.250" fill="#1c2444"/>
<text x="1510.4" y="669.2" paint-order="stroke" stroke="#fff" stroke-width="2" stroke-opacity=".85" stroke-linejoin="round" >Thimphu</text>
<circle cx="1518.0" cy="703.0" r="3.250" fill="#fff" fill-opacity=".85" stroke="#1c2444" stroke-width="1.050"/><circle cx="1518.0" cy="703.0" r="1.250" fill="#1c2444"/>
<text x="1517.6" y="715.8" paint-order="stroke" stroke="#fff" stroke-width="2" stroke-opacity=".85" stroke-linejoin="round" >Dhaka</text>
<circle cx="1582.4" cy="786.0" r="3.250" fill="#fff" fill-opacity=".85" stroke="#1c2444" stroke-width="1.050"/><circle cx="1582.4" cy="786.0" r="1.250" fill="#1c2444"/>
<text x="1582.0" y="798.8" paint-order="stroke" stroke="#fff" stroke-width="2" stroke-opacity=".85" stroke-linejoin="round" >Rangoon</text>
<circle cx="861.0" cy="801.0" r="3.250" fill="#fff" fill-opacity=".85" stroke="#1c2444" stroke-width="1.050"/><circle cx="861.0" cy="801.0" r="1.250" fill="#1c2444"/>
<text x="861.4" y="813.2" paint-order="stroke" stroke="#fff" stroke-width="2" stroke-opacity=".85" stroke-linejoin="round" >Khartoum</text>
<circle cx="932.6" cy="807.0" r="3.250" fill="#fff" fill-opacity=".85" stroke="#1c2444" stroke-width="1.050"/><circle cx="932.6" cy="807.0" r="1.250" fill="#1c2444"/>
<text x="932.6" y="819.2" paint-order="stroke" stroke="#fff" stroke-width="2" stroke-opacity=".85" stroke-linejoin="round" >Asmera</text>
<circle cx="991.6" cy="803.6" r="3.250" fill="#fff" fill-opacity=".85" stroke="#1c2444" stroke-width="1.050"/><circle cx="991.6" cy="803.6" r="1.250" fill="#1c2444"/>
<text x="992.0" y="816.8" paint-order="stroke" stroke="#fff" stroke-width="2" stroke-opacity=".85" stroke-linejoin="round" >Sana.a</text>
<circle cx="979.6" cy="847.6" r="3.250" fill="#fff" fill-opacity=".85" stroke="#1c2444" stroke-width="1.050"/><circle cx="979.6" cy="847.6" r="1.250" fill="#1c2444"/>
<text x="980.4" y="861.8" paint-order="stroke" stroke="#fff" stroke-width="2" stroke-opacity=".85" stroke-linejoin="round" >Djibouti</text>
<circle cx="929.6" cy="876.0" r="3.250" fill="#fff" fill-opacity=".85" stroke="#1c2444" stroke-width="1.050"/><circle cx="929.6" cy="876.0" r="1.250" fill="#1c2444"/>
<text x="930.0" y="888.8" paint-order="stroke" stroke="#fff" stroke-width="2" stroke-opacity=".85" stroke-linejoin="round" >Addis Ababa</text>
<text x="758.0" y="524.4" paint-order="stroke" stroke="#fff" stroke-width="2" stroke-opacity=".85" stroke-linejoin="round" >Athens</text>
<text x="1154.0" y="525.8" paint-order="stroke" stroke="#fff" stroke-width="2" stroke-opacity=".85" stroke-linejoin="round" >Ashkhabad</text>
<text x="1156.0" y="715.4" paint-order="stroke" stroke="#fff" stroke-width="2" stroke-opacity=".85" stroke-linejoin="round" >Muscat</text>
</g>
<g font-family="DejaVu Sans, sans-serif" font-style="italic" font-size="10" text-anchor="middle" fill="#484848">
<text x="928.0" y="561.0" paint-order="stroke" stroke="#fff" stroke-width="2" stroke-opacity=".85" stroke-linejoin="round" >Syria</text>
<text x="828.0" y="673.0" paint-order="stroke" stroke="#fff" stroke-width="2" stroke-opacity=".85" stroke-linejoin="round" >Egypt</text>
<text x="1107.0" y="594.0" paint-order="stroke" stroke="#fff" stroke-width="2" stroke-opacity=".85" stroke-linejoin="round" >Iran</text>
<text x="1279.0" y="628.4" paint-order="stroke" stroke="#fff" stroke-width="2" stroke-opacity=".85" stroke-linejoin="round" >Pakistan</text>
<text x="1395.0" y="719.0" paint-order="stroke" stroke="#fff" stroke-width="2" stroke-opacity=".85" stroke-linejoin="round" >India</text>
<text x="1128.0" y="747.4" paint-order="stroke" stroke="#fff" stroke-width="2" stroke-opacity=".85" stroke-linejoin="round" >Oman</text>
<text x="1032.0" y="804.0" paint-order="stroke" stroke="#fff" stroke-width="2" stroke-opacity=".85" stroke-linejoin="round" >Yemen</text>
<text x="799.0" y="822.0" paint-order="stroke" stroke="#fff" stroke-width="2" stroke-opacity=".85" stroke-linejoin="round" >Sudan</text>
<text x="1588.0" y="741.0" paint-order="stroke" stroke="#fff" stroke-width="2" stroke-opacity=".85" stroke-linejoin="round" >Burma</text>
<text x="828.0" y="892.0" paint-order="stroke" stroke="#fff" stroke-width="2" stroke-opacity=".85" stroke-linejoin="round" >South Sudan</text>
</g>
<g font-family="DejaVu Sans, sans-serif" font-style="italic" font-size="9.500" text-anchor="middle" fill="#2a58b0">
<text x="929.0" y="750.4" paint-order="stroke" stroke="#fff" stroke-width="2" stroke-opacity=".85" stroke-linejoin="round" stroke-opacity=".5">Red Sea</text>
<text x="1202.6" y="843.4" paint-order="stroke" stroke="#fff" stroke-width="2" stroke-opacity=".85" stroke-linejoin="round" stroke-opacity=".5">Arabian Sea</text>
<text x="1485.6" y="818.4" paint-order="stroke" stroke="#fff" stroke-width="2" stroke-opacity=".85" stroke-linejoin="round" stroke-opacity=".5">Bay of Bengal</text>
<text x="1578.0" y="859.4" paint-order="stroke" stroke="#fff" stroke-width="2" stroke-opacity=".85" stroke-linejoin="round" stroke-opacity=".5">Andaman Sea</text>
<text x="703.0" y="528.4" paint-order="stroke" stroke="#fff" stroke-width="2" stroke-opacity=".85" stroke-linejoin="round" stroke-opacity=".5">Ionian Sea</text>
</g>
</svg>
<div style="position:absolute;left:446px;top:173px;width:27px;height:16.600px;border-radius:8.300px;background:#ff1050;color:#fff;font-size:12.500px;line-height:16.600px;text-align:center;font-family:Liberation Sans,sans-serif;padding-left:2px">5</div>
<div style="position:absolute;left:428.400px;top:177.700px;width:27.200px;height:27.200px;border-radius:50%;background:#fff;border:1.500px solid #f28aa8"></div>
<div style="position:absolute;left:424.200px;top:171.200px;width:29px;height:29px;border-radius:50%;background:#85a0ac;border:2px solid #fff;color:#fff;font-size:12.500px;line-height:25.500px;text-align:center;font-family:Liberation Sans,sans-serif">3</div>
<div style="position:absolute;left:11px;top:10px;width:26px;height:53px;border-radius:3px;background:#fff;box-shadow:0 1px 4px rgba(0,0,0,.35)"><div style="position:absolute;left:0;top:26px;width:26px;height:27px;background:#f4f4f4;border-top:1px solid #ccc;border-radius:0 0 3px 3px"></div><div style="position:absolute;left:0;top:0;width:26px;height:26px;font:bold 18px/27px Liberation Sans,sans-serif;text-align:center;color:#000">+</div><div style="position:absolute;left:10px;top:40px;width:6.200px;height:3px;background:#c2c2c2"></div></div>
<div style="position:absolute;left:778.800px;top:9.900px;width:36.200px;height:36.200px;border-radius:5px;background:#fff;box-shadow:0 1px 3px rgba(60,50,90,.45)"><svg width="36" height="36" viewBox="0 0 36 36" fill="none"><path d="M25.600,10.700L13,10.900C6,11 6,18.300 13,18.500L23.500,19C30.500,19.300 30.500,25.800 23.500,25.900L10.500,26.200" stroke="#7a7a7a" stroke-width="1.700"/><circle cx="25.600" cy="10.700" r="2.600" fill="#0a0a0a"/><circle cx="10.500" cy="26.200" r="2.600" fill="#0a0a0a"/></svg></div>
<div style="position:absolute;left:825px;top:9.900px;width:36.200px;height:36.200px;border-radius:5px;background:#fff;box-shadow:0 1px 3px rgba(60,50,90,.45)"><svg width="36" height="36" viewBox="0 0 36 36"><path d="M17.900,14.500L31.100,22.900L17.900,30.700L4.900,22.900Z" fill="#c2c2c2" stroke="#a8a8a8" stroke-width=".300"/><path d="M17.900,10.200L31.100,18.600L17.900,26.400L4.900,18.600Z" fill="#cfcfcf" stroke="#bdbdbd" stroke-width=".300"/><path d="M17.900,6L31.100,14.400L17.900,22.200L4.900,14.400Z" fill="#e2e2e2" stroke="#f4f4f4" stroke-width=".600"/></svg></div>
</div></div>
<!--MAP-END-->
</body>
</html>
